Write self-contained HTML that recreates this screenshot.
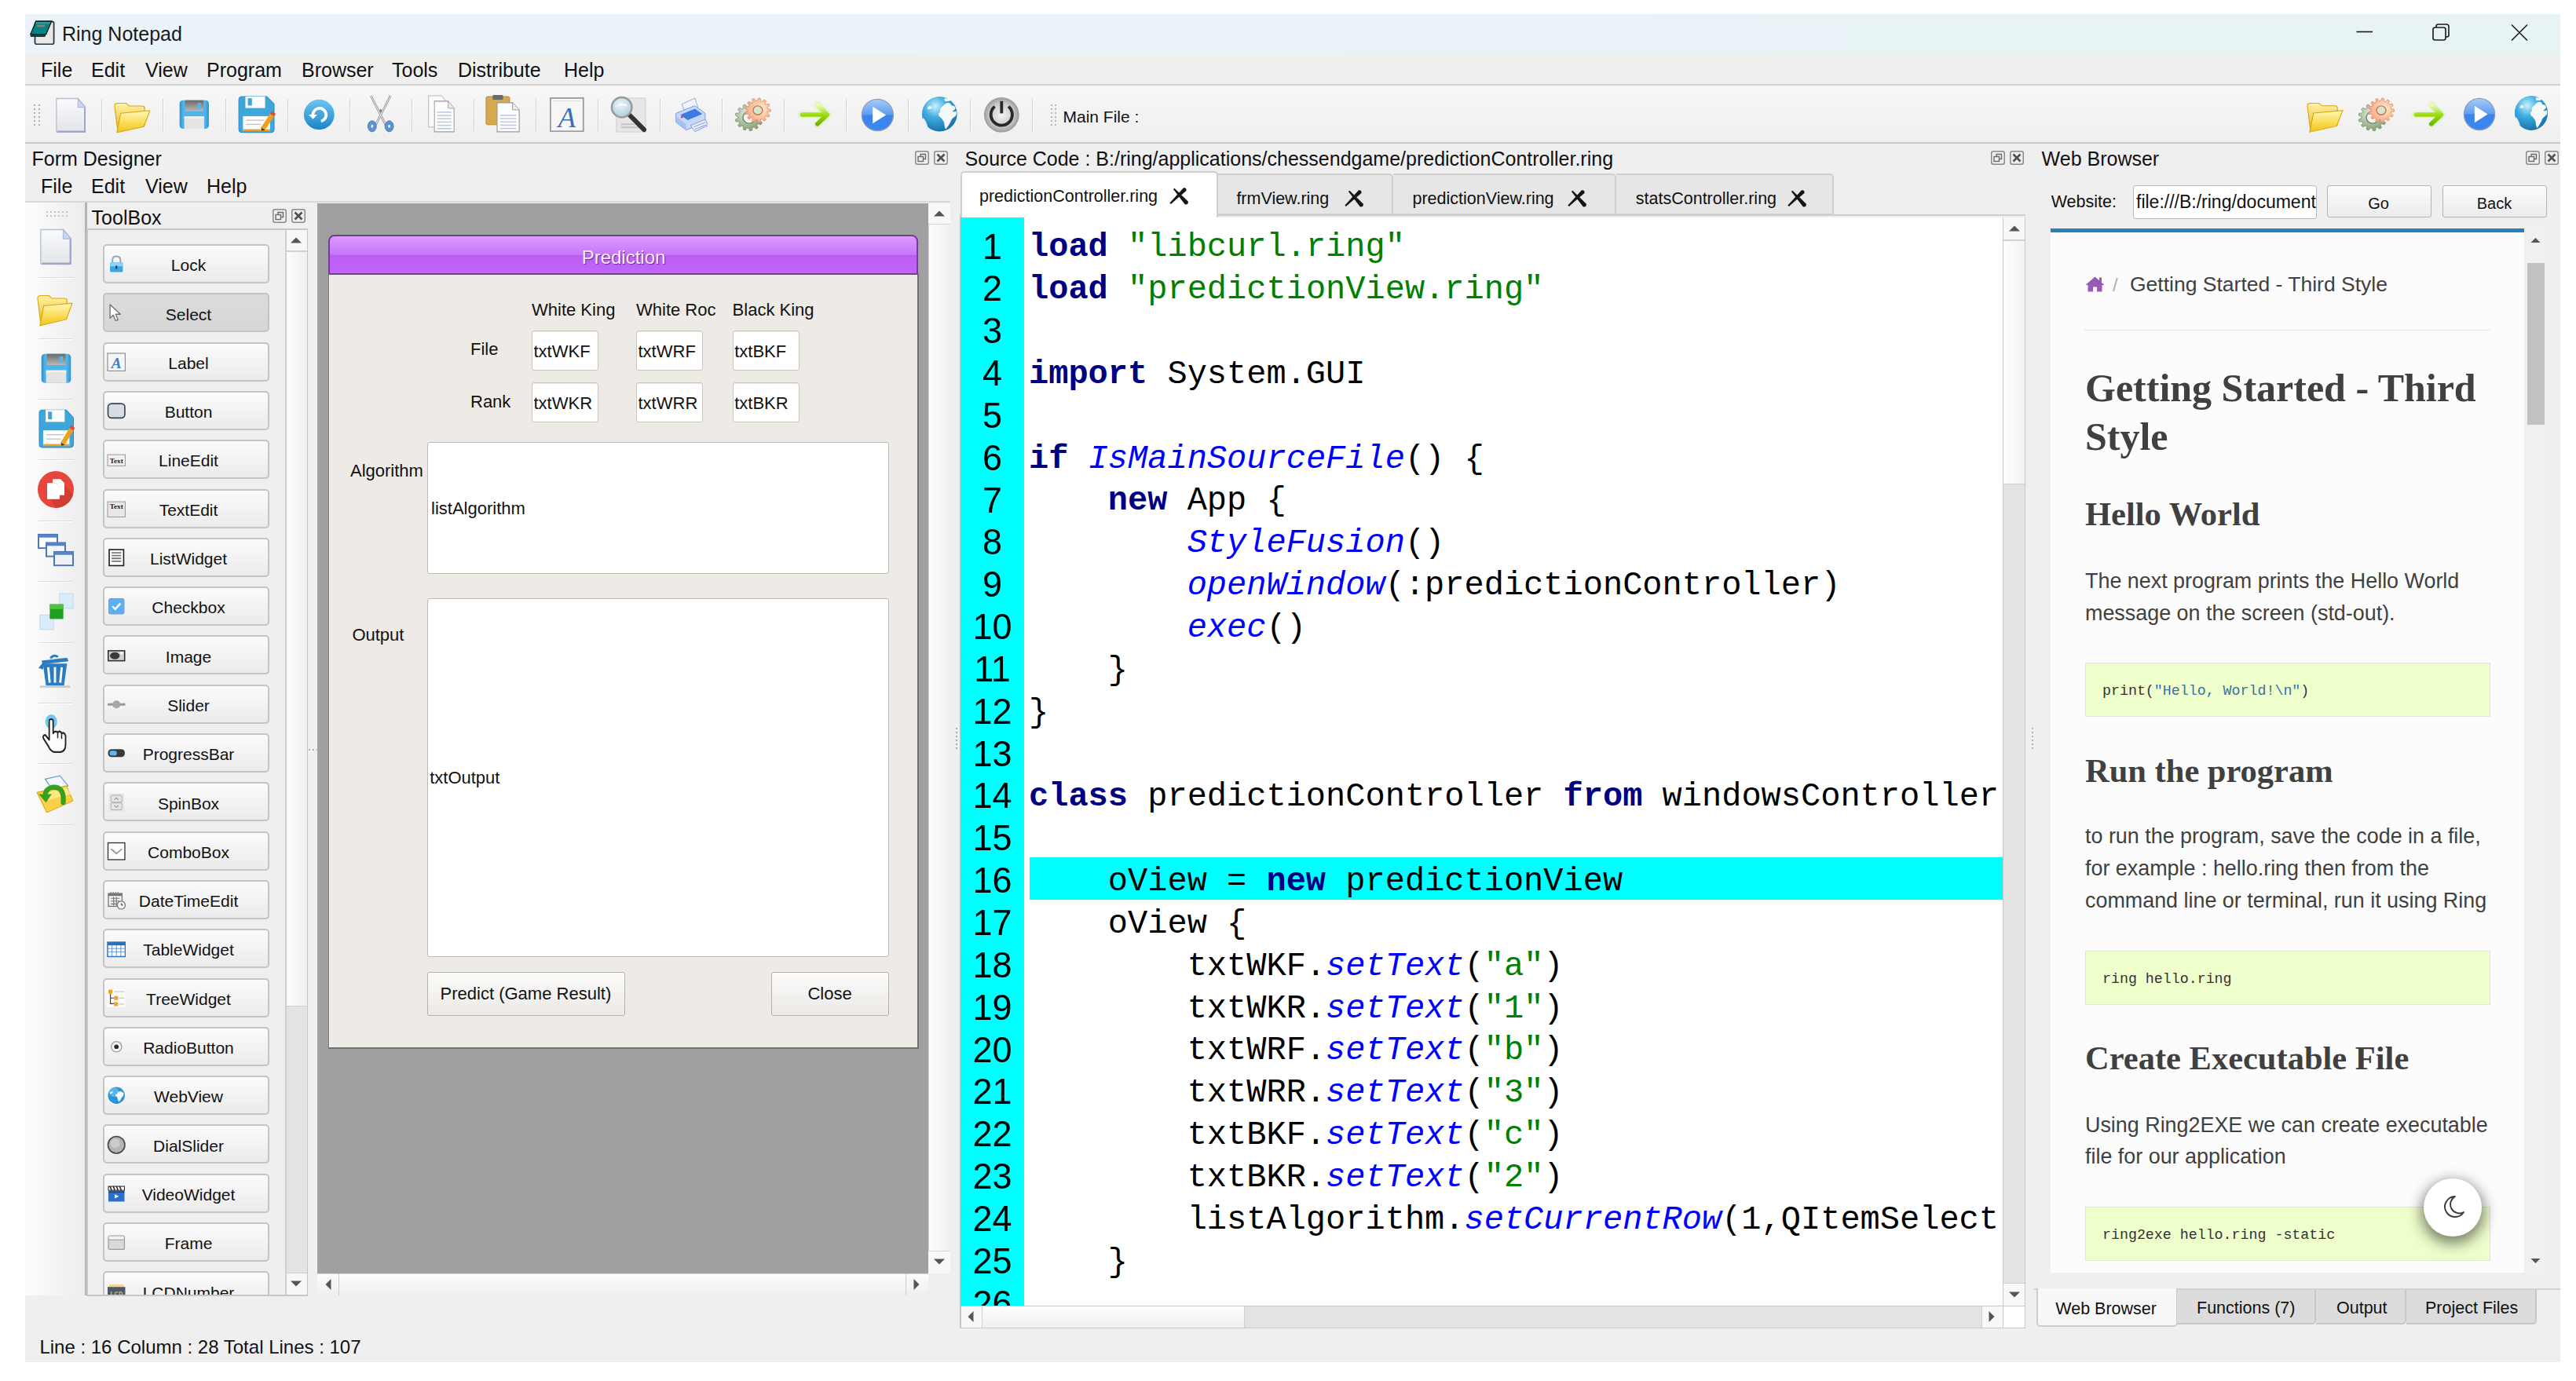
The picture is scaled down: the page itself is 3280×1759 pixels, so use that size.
<!DOCTYPE html><html><head><meta charset="utf-8"><title>Ring Notepad</title><style>
html,body{margin:0;padding:0;}
body{width:3280px;height:1759px;position:relative;overflow:hidden;background:#fff;font-family:"Liberation Sans",sans-serif;}
.a{position:absolute;box-sizing:border-box;}
.t{position:absolute;line-height:1;white-space:pre;}
</style></head><body>
<div class="a" style="left:32.0px;top:18.0px;width:3228.0px;height:1717.0px;background:#efefef"></div>
<div class="a" style="left:32.0px;top:18.0px;width:3228.0px;height:49.0px;background:linear-gradient(90deg,#ebf3f9,#e8f3f6)"></div>
<div class="t " style="left:79.0px;top:30.8px;font-size:25px;font-family:'Liberation Sans',sans-serif;color:#1a1a1a;">Ring Notepad</div>
<div class="a" style="left:32.0px;top:67.0px;width:3228.0px;height:41.0px;background:#efefef"></div>
<div class="t " style="left:52.0px;top:76.8px;font-size:25px;font-family:'Liberation Sans',sans-serif;color:#111;">File</div>
<div class="t " style="left:116.0px;top:76.8px;font-size:25px;font-family:'Liberation Sans',sans-serif;color:#111;">Edit</div>
<div class="t " style="left:185.0px;top:76.8px;font-size:25px;font-family:'Liberation Sans',sans-serif;color:#111;">View</div>
<div class="t " style="left:263.0px;top:76.8px;font-size:25px;font-family:'Liberation Sans',sans-serif;color:#111;">Program</div>
<div class="t " style="left:384.0px;top:76.8px;font-size:25px;font-family:'Liberation Sans',sans-serif;color:#111;">Browser</div>
<div class="t " style="left:499.0px;top:76.8px;font-size:25px;font-family:'Liberation Sans',sans-serif;color:#111;">Tools</div>
<div class="t " style="left:583.0px;top:76.8px;font-size:25px;font-family:'Liberation Sans',sans-serif;color:#111;">Distribute</div>
<div class="t " style="left:718.0px;top:76.8px;font-size:25px;font-family:'Liberation Sans',sans-serif;color:#111;">Help</div>
<div class="a" style="left:32.0px;top:107.0px;width:3228.0px;height:76.0px;background:linear-gradient(180deg,#f7f7f7,#efefef);border-top:2px solid #d2d2d2;border-bottom:2px solid #c9c9c9"></div>
<div class="t " style="left:1353.5px;top:138.2px;font-size:21px;font-family:'Liberation Sans',sans-serif;color:#111;">Main File :</div>
<div class="t " style="left:40.5px;top:189.8px;font-size:25px;font-family:'Liberation Sans',sans-serif;color:#111;">Form Designer</div>
<div class="t " style="left:52.0px;top:225.4px;font-size:25px;font-family:'Liberation Sans',sans-serif;color:#111;">File</div>
<div class="t " style="left:116.0px;top:225.4px;font-size:25px;font-family:'Liberation Sans',sans-serif;color:#111;">Edit</div>
<div class="t " style="left:185.0px;top:225.4px;font-size:25px;font-family:'Liberation Sans',sans-serif;color:#111;">View</div>
<div class="t " style="left:263.0px;top:225.4px;font-size:25px;font-family:'Liberation Sans',sans-serif;color:#111;">Help</div>
<div class="a" style="left:32.0px;top:256.0px;width:1178.0px;height:2.0px;background:#d8d8d8"></div>
<div class="a" style="left:32.0px;top:258.0px;width:77.0px;height:1392.0px;background:linear-gradient(90deg,#fdfdfd,#ececec)"></div>
<div class="a" style="left:108.0px;top:258.0px;width:3.0px;height:1392.0px;background:#b4b4b4"></div>
<div class="t " style="left:116.6px;top:264.8px;font-size:25px;font-family:'Liberation Sans',sans-serif;color:#111;">ToolBox</div>
<div class="a" style="left:110.0px;top:291.0px;width:282.0px;height:1360.0px;background:#efefef;border:2px solid #c6c6c6"></div>
<div class="a" style="left:363.0px;top:293.0px;width:28.0px;height:1356.0px;background:#e3e3e3;border-left:2px solid #cfcfcf"></div>
<div class="a" style="left:365.0px;top:320.0px;width:26.0px;height:962.0px;background:linear-gradient(90deg,#fbfbfb,#f1f1f1);border-top:1px solid #d0d0d0;border-bottom:1px solid #d0d0d0"></div>
<div class="a" style="left:365.0px;top:293.0px;width:26.0px;height:27.0px;background:#f7f7f7;border-bottom:1px solid #d0d0d0"></div>
<div class="a" style="left:365.0px;top:1621.0px;width:26.0px;height:28.0px;background:#f7f7f7;border-top:1px solid #d0d0d0"></div>
<div class="a" style="left:404.0px;top:259.0px;width:778.0px;height:1363.0px;background:#a0a0a0"></div>
<div class="a" style="left:1182.0px;top:259.0px;width:28.0px;height:1363.0px;background:linear-gradient(90deg,#fcfcfc,#f0f0f0);border-left:1px solid #d6d6d6"></div>
<div class="a" style="left:1182.0px;top:259.0px;width:28.0px;height:27.0px;background:#f8f8f8;border-bottom:1px solid #d6d6d6"></div>
<div class="a" style="left:1182.0px;top:1593.0px;width:28.0px;height:29.0px;background:#f8f8f8;border-top:1px solid #d6d6d6"></div>
<div class="a" style="left:404.0px;top:1622.0px;width:778.0px;height:28.0px;background:linear-gradient(180deg,#fbfbfb,#efefef);border-top:1px solid #d6d6d6"></div>
<div class="a" style="left:404.0px;top:1622.0px;width:28.0px;height:28.0px;border-right:1px solid #cfcfcf"></div>
<div class="a" style="left:1153.0px;top:1622.0px;width:29.0px;height:28.0px;border-left:1px solid #cfcfcf"></div>
<div class="a" style="left:1182.0px;top:1622.0px;width:28.0px;height:28.0px;background:#efefef"></div>
<div class="a" style="left:418.0px;top:349.0px;width:751.5px;height:987.0px;background:#eeebe7;border-right:2px solid #6f6f6f;border-bottom:2px solid #6f6f6f;border-left:1px solid #7a7a7a;box-shadow:inset 1px 0 0 #fff"></div>
<div class="a" style="left:418.0px;top:299.0px;width:750.5px;height:51.0px;background:linear-gradient(180deg,#dd9afd 0%,#c978fb 46%,#c572fa 50%,#bb5ef2 52%,#c264fb 100%);border-radius:8px 8px 0 0;border:2px solid #70408f"></div>
<div class="t " style="left:794.0px;top:315.7px;font-size:24px;font-family:'Liberation Sans',sans-serif;color:#f7eefc;transform:translateX(-50%);text-shadow:1px 1px 1px #6a2a8a">Prediction</div>
<div class="t " style="left:677.0px;top:384.4px;font-size:22px;font-family:'Liberation Sans',sans-serif;color:#111;">White King</div>
<div class="t " style="left:810.0px;top:384.4px;font-size:22px;font-family:'Liberation Sans',sans-serif;color:#111;">White Roc</div>
<div class="t " style="left:932.6px;top:384.4px;font-size:22px;font-family:'Liberation Sans',sans-serif;color:#111;">Black King</div>
<div class="t " style="left:599.0px;top:433.7px;font-size:22px;font-family:'Liberation Sans',sans-serif;color:#111;">File</div>
<div class="t " style="left:599.0px;top:501.4px;font-size:22px;font-family:'Liberation Sans',sans-serif;color:#111;">Rank</div>
<div class="a" style="left:677.0px;top:421.0px;width:85.0px;height:51.0px;background:#fff;border:1px solid #c9c6c2;border-radius:3px;box-shadow:inset 0 1px 0 #e8e8e8"></div>
<div class="t " style="left:679.5px;top:436.9px;font-size:22px;font-family:'Liberation Sans',sans-serif;color:#111;width:80px;overflow:hidden">txtWKF</div>
<div class="a" style="left:810.0px;top:421.0px;width:85.0px;height:51.0px;background:#fff;border:1px solid #c9c6c2;border-radius:3px;box-shadow:inset 0 1px 0 #e8e8e8"></div>
<div class="t " style="left:812.5px;top:436.9px;font-size:22px;font-family:'Liberation Sans',sans-serif;color:#111;width:80px;overflow:hidden">txtWRF</div>
<div class="a" style="left:932.7px;top:421.0px;width:85.0px;height:51.0px;background:#fff;border:1px solid #c9c6c2;border-radius:3px;box-shadow:inset 0 1px 0 #e8e8e8"></div>
<div class="t " style="left:935.2px;top:436.9px;font-size:22px;font-family:'Liberation Sans',sans-serif;color:#111;width:80px;overflow:hidden">txtBKF</div>
<div class="a" style="left:677.0px;top:486.7px;width:85.0px;height:51.0px;background:#fff;border:1px solid #c9c6c2;border-radius:3px;box-shadow:inset 0 1px 0 #e8e8e8"></div>
<div class="t " style="left:679.5px;top:502.6px;font-size:22px;font-family:'Liberation Sans',sans-serif;color:#111;width:80px;overflow:hidden">txtWKR</div>
<div class="a" style="left:810.0px;top:486.7px;width:85.0px;height:51.0px;background:#fff;border:1px solid #c9c6c2;border-radius:3px;box-shadow:inset 0 1px 0 #e8e8e8"></div>
<div class="t " style="left:812.5px;top:502.6px;font-size:22px;font-family:'Liberation Sans',sans-serif;color:#111;width:80px;overflow:hidden">txtWRR</div>
<div class="a" style="left:932.7px;top:486.7px;width:85.0px;height:51.0px;background:#fff;border:1px solid #c9c6c2;border-radius:3px;box-shadow:inset 0 1px 0 #e8e8e8"></div>
<div class="t " style="left:935.2px;top:502.6px;font-size:22px;font-family:'Liberation Sans',sans-serif;color:#111;width:80px;overflow:hidden">txtBKR</div>
<div class="t " style="left:446.0px;top:589.2px;font-size:22px;font-family:'Liberation Sans',sans-serif;color:#111;">Algorithm</div>
<div class="a" style="left:544.0px;top:563.0px;width:588.0px;height:168.0px;background:#fff;border:1px solid #bdbab6;border-radius:3px"></div>
<div class="t " style="left:549.0px;top:637.4px;font-size:22px;font-family:'Liberation Sans',sans-serif;color:#111;">listAlgorithm</div>
<div class="t " style="left:448.4px;top:797.7px;font-size:22px;font-family:'Liberation Sans',sans-serif;color:#111;">Output</div>
<div class="a" style="left:543.5px;top:762.0px;width:588.5px;height:457.0px;background:#fff;border:1px solid #bdbab6;border-radius:3px"></div>
<div class="t " style="left:547.2px;top:980.0px;font-size:22px;font-family:'Liberation Sans',sans-serif;color:#111;">txtOutput</div>
<div class="a" style="left:544.0px;top:1237.5px;width:252.0px;height:56.0px;background:linear-gradient(180deg,#fbfbfa,#ebe9e6);border:1px solid #b5b2ae;border-radius:3px"></div>
<div class="t " style="left:560.6px;top:1255.2px;font-size:22px;font-family:'Liberation Sans',sans-serif;color:#111;">Predict (Game Result)</div>
<div class="a" style="left:981.5px;top:1237.5px;width:150.5px;height:56.0px;background:linear-gradient(180deg,#fbfbfa,#ebe9e6);border:1px solid #b5b2ae;border-radius:3px"></div>
<div class="t " style="left:1028.4px;top:1255.2px;font-size:22px;font-family:'Liberation Sans',sans-serif;color:#111;">Close</div>
<div class="t " style="left:1228.6px;top:190.1px;font-size:25px;font-family:'Liberation Sans',sans-serif;color:#111;">Source Code : B:/ring/applications/chessendgame/predictionController.ring</div>
<div class="a" style="left:1223.0px;top:273.0px;width:1356.0px;height:4.0px;background:#efefef;border-top:2px solid #cfcfcf"></div>
<div class="a" style="left:1223.0px;top:218.0px;width:327.5px;height:59.0px;background:#fff;border:2px solid #cfcfcf;border-bottom:none;border-radius:5px 5px 0 0"></div>
<div class="t " style="left:1247.0px;top:240.3px;font-size:21.5px;font-family:'Liberation Sans',sans-serif;color:#111;">predictionController.ring</div>
<svg class="a" style="left:1488.5px;top:238.0px" width="24" height="24" viewBox="0 0 24 24"><path d="M6.45 1.74 L23.86 18.67 Q24.4 22.8 19.74 22.33 L4.95 3.07 Z" fill="#151515"/><path d="M17.96 1.31 Q22 0.6 21.44 4.89 L1.8 21.92 L0.4 20.48 Z" fill="#151515"/></svg>
<div class="a" style="left:1550.5px;top:221.0px;width:223.5px;height:53.0px;background:#e6e6e6;border:2px solid #cfcfcf;border-left:none;border-radius:0 5px 0 0"></div>
<div class="t " style="left:1574.4px;top:242.8px;font-size:21.5px;font-family:'Liberation Sans',sans-serif;color:#111;">frmView.ring</div>
<svg class="a" style="left:1712.0px;top:240.5px" width="24" height="24" viewBox="0 0 24 24"><path d="M6.45 1.74 L23.86 18.67 Q24.4 22.8 19.74 22.33 L4.95 3.07 Z" fill="#151515"/><path d="M17.96 1.31 Q22 0.6 21.44 4.89 L1.8 21.92 L0.4 20.48 Z" fill="#151515"/></svg>
<div class="a" style="left:1774.0px;top:221.0px;width:284.3px;height:53.0px;background:#e6e6e6;border:2px solid #cfcfcf;border-left:none;border-radius:0 5px 0 0"></div>
<div class="t " style="left:1798.5px;top:242.8px;font-size:21.5px;font-family:'Liberation Sans',sans-serif;color:#111;">predictionView.ring</div>
<svg class="a" style="left:1996.0px;top:240.5px" width="24" height="24" viewBox="0 0 24 24"><path d="M6.45 1.74 L23.86 18.67 Q24.4 22.8 19.74 22.33 L4.95 3.07 Z" fill="#151515"/><path d="M17.96 1.31 Q22 0.6 21.44 4.89 L1.8 21.92 L0.4 20.48 Z" fill="#151515"/></svg>
<div class="a" style="left:2058.3px;top:221.0px;width:276.7px;height:53.0px;background:#e6e6e6;border:2px solid #cfcfcf;border-left:none;border-radius:0 5px 0 0"></div>
<div class="t " style="left:2082.8px;top:242.8px;font-size:21.5px;font-family:'Liberation Sans',sans-serif;color:#111;">statsController.ring</div>
<svg class="a" style="left:2275.5px;top:240.5px" width="24" height="24" viewBox="0 0 24 24"><path d="M6.45 1.74 L23.86 18.67 Q24.4 22.8 19.74 22.33 L4.95 3.07 Z" fill="#151515"/><path d="M17.96 1.31 Q22 0.6 21.44 4.89 L1.8 21.92 L0.4 20.48 Z" fill="#151515"/></svg>
<div class="a" style="left:1223.0px;top:277.0px;width:1327.0px;height:1386.0px;background:#fff"></div>
<div class="a" style="left:1223.0px;top:277.0px;width:81.0px;height:1386.0px;background:#00ffff"></div>
<div class="a" style="left:1222.0px;top:273.0px;width:1.0px;height:1419.0px;background:#c4c4c4"></div>
<div class="a" style="left:1311.0px;top:1092.0px;width:1239.0px;height:53.5px;background:#00ffff"></div>
<div class="a" style="left:2550.0px;top:277.0px;width:29.0px;height:1386.0px;background:#e3e3e3;border-left:1px solid #c8c8c8;border-right:1px solid #c8c8c8"></div>
<div class="a" style="left:2551.0px;top:305.7px;width:27.0px;height:311.0px;background:linear-gradient(90deg,#fdfdfd,#f3f3f3);border-top:1px solid #d0d0d0;border-bottom:1px solid #d0d0d0"></div>
<div class="a" style="left:2551.0px;top:277.0px;width:27.0px;height:29.0px;background:#f8f8f8;border-bottom:1px solid #d0d0d0"></div>
<div class="a" style="left:2551.0px;top:1634.0px;width:27.0px;height:29.0px;background:#f8f8f8;border-top:1px solid #d0d0d0"></div>
<div class="a" style="left:1223.0px;top:1663.0px;width:1327.0px;height:29.0px;background:#e3e3e3;border:1px solid #c8c8c8"></div>
<div class="a" style="left:1250.0px;top:1664.0px;width:335.0px;height:27.0px;background:linear-gradient(180deg,#fdfdfd,#f0f0f0);border-left:1px solid #d0d0d0;border-right:1px solid #d0d0d0"></div>
<div class="a" style="left:1224.0px;top:1664.0px;width:26.0px;height:27.0px;background:#f8f8f8"></div>
<div class="a" style="left:2523.0px;top:1664.0px;width:27.0px;height:27.0px;background:#f8f8f8;border-left:1px solid #d0d0d0"></div>
<div class="a" style="left:2550.0px;top:1663.0px;width:29.0px;height:29.0px;background:#fff;border:1px solid #c8c8c8"></div>
<div class="t " style="left:2599.6px;top:190.1px;font-size:25px;font-family:'Liberation Sans',sans-serif;color:#111;">Web Browser</div>
<div class="t " style="left:2611.7px;top:247.2px;font-size:21.5px;font-family:'Liberation Sans',sans-serif;color:#111;">Website:</div>
<div class="a" style="left:2715.5px;top:236.0px;width:234.0px;height:42.5px;background:#fff;border:1px solid #b9b9b9;border-radius:3px"></div>
<div class="t " style="left:2720.0px;top:245.9px;font-size:23px;font-family:'Liberation Sans',sans-serif;color:#111;width:229px;overflow:hidden">file:///B:/ring/document</div>
<div class="a" style="left:2963.0px;top:236.0px;width:133.0px;height:41.0px;background:linear-gradient(180deg,#fcfcfc,#ececec);border:1px solid #b3b3b3;border-radius:3px"></div>
<div class="t " style="left:3028.5px;top:249.1px;font-size:20px;font-family:'Liberation Sans',sans-serif;color:#111;transform:translateX(-50%)">Go</div>
<div class="a" style="left:3109.5px;top:236.0px;width:133.0px;height:41.0px;background:linear-gradient(180deg,#fcfcfc,#ececec);border:1px solid #b3b3b3;border-radius:3px"></div>
<div class="t " style="left:3176.0px;top:249.1px;font-size:20px;font-family:'Liberation Sans',sans-serif;color:#111;transform:translateX(-50%)">Back</div>
<div class="a" style="left:2610.5px;top:291.0px;width:604.0px;height:5.0px;background:#2980b9"></div>
<div class="a" style="left:2610.5px;top:296.0px;width:604.0px;height:1325.0px;background:#fcfcfc"></div>
<div class="a" style="left:3214.0px;top:291.0px;width:29.0px;height:1330.0px;background:#f0f0f0"></div>
<div class="a" style="left:3218.0px;top:335.0px;width:22.0px;height:206.0px;background:#c1c1c1"></div>
<div class="t " style="left:2712.0px;top:348.9px;font-size:26.5px;font-family:'Liberation Sans',sans-serif;color:#404040;">Getting Started - Third Style</div>
<div class="t " style="left:2690.0px;top:351.0px;font-size:24px;font-family:'Liberation Sans',sans-serif;color:#b0b0b0;">/</div>
<svg class="a" style="left:2655.0px;top:352.0px" width="25" height="20" viewBox="0 0 25 20"><path d="M12.5 0.5 L0.5 11 H3.5 V19.5 H10 V13.5 H15 V19.5 H21.5 V11 H24.5 Z" fill="#9b59b6"/><rect x="18" y="1.5" width="3" height="6" fill="#9b59b6"/></svg>
<div class="a" style="left:2654.0px;top:420.0px;width:517.0px;height:1.0px;background:#e1e4e5"></div>
<div class="t " style="left:2655.0px;top:469.4px;font-size:50px;font-family:'Liberation Serif',serif;color:#404040;font-weight:bold">Getting Started - Third</div>
<div class="t " style="left:2655.0px;top:531.4px;font-size:50px;font-family:'Liberation Serif',serif;color:#404040;font-weight:bold">Style</div>
<div class="t " style="left:2655.0px;top:634.4px;font-size:42.5px;font-family:'Liberation Serif',serif;color:#404040;font-weight:bold">Hello World</div>
<div class="t " style="left:2655.0px;top:727.2px;font-size:26.9px;font-family:'Liberation Sans',sans-serif;color:#404040;">The next program prints the Hello World</div>
<div class="t " style="left:2655.0px;top:768.2px;font-size:26.9px;font-family:'Liberation Sans',sans-serif;color:#404040;">message on the screen (std-out).</div>
<div class="a" style="left:2655.0px;top:844.0px;width:516.0px;height:69.0px;background:#eeffcc;border:1px solid #e1e4e5"></div>
<div class="t " style="left:2677.0px;top:871.4px;font-size:18.3px;font-family:'Liberation Mono',monospace;color:#333;">print(<span style="color:#4070a0">&quot;Hello, World!\n&quot;</span>)</div>
<div class="t " style="left:2655.0px;top:960.7px;font-size:42.5px;font-family:'Liberation Serif',serif;color:#404040;font-weight:bold">Run the program</div>
<div class="t " style="left:2655.0px;top:1052.2px;font-size:26.9px;font-family:'Liberation Sans',sans-serif;color:#404040;">to run the program, save the code in a file,</div>
<div class="t " style="left:2655.0px;top:1093.2px;font-size:26.9px;font-family:'Liberation Sans',sans-serif;color:#404040;">for example : hello.ring then from the</div>
<div class="t " style="left:2655.0px;top:1133.8px;font-size:26.9px;font-family:'Liberation Sans',sans-serif;color:#404040;">command line or terminal, run it using Ring</div>
<div class="a" style="left:2655.0px;top:1210.5px;width:516.0px;height:69.0px;background:#eeffcc;border:1px solid #e1e4e5"></div>
<div class="t " style="left:2677.0px;top:1238.0px;font-size:18.3px;font-family:'Liberation Mono',monospace;color:#333;">ring hello.ring</div>
<div class="t " style="left:2655.0px;top:1327.4px;font-size:42.5px;font-family:'Liberation Serif',serif;color:#404040;font-weight:bold">Create Executable File</div>
<div class="t " style="left:2655.0px;top:1420.2px;font-size:26.9px;font-family:'Liberation Sans',sans-serif;color:#404040;">Using Ring2EXE we can create executable</div>
<div class="t " style="left:2655.0px;top:1460.2px;font-size:26.9px;font-family:'Liberation Sans',sans-serif;color:#404040;">file for our application</div>
<div class="a" style="left:2655.0px;top:1537.0px;width:516.0px;height:69.0px;background:#eeffcc;border:1px solid #e1e4e5"></div>
<div class="t " style="left:2677.0px;top:1564.0px;font-size:18.3px;font-family:'Liberation Mono',monospace;color:#333;">ring2exe hello.ring -static</div>
<div class="a" style="left:3086.0px;top:1500.5px;width:74.0px;height:74.0px;background:#fff;border-radius:50%;box-shadow:0 6px 18px 3px rgba(0,0,0,0.5)"></div>
<svg class="a" style="left:3104.0px;top:1518.0px" width="38" height="38" viewBox="0 0 38 38"><path d="M22 6 A13 13 0 1 0 33 26 A11 11 0 0 1 22 6 Z" fill="none" stroke="#3a3a3a" stroke-width="1.9" stroke-linejoin="round"/></svg>
<div class="a" style="left:2590.0px;top:1641.0px;width:670.0px;height:2.0px;background:#d2d2d2"></div>
<div class="a" style="left:2593.0px;top:1641.0px;width:180.0px;height:49.0px;background:#f7f7f7;border:2px solid #cdcdcd;border-top:none;border-radius:0 0 5px 5px"></div>
<div class="a" style="left:2772.0px;top:1643.0px;width:177.0px;height:44.0px;background:#dcdcdc;border:2px solid #c8c8c8;border-top:none;border-left:none;border-radius:0 0 5px 0"></div>
<div class="a" style="left:2949.0px;top:1643.0px;width:114.6px;height:44.0px;background:#dcdcdc;border:2px solid #c8c8c8;border-top:none;border-left:none;border-radius:0 0 5px 0"></div>
<div class="a" style="left:3063.6px;top:1643.0px;width:166.4px;height:44.0px;background:#dcdcdc;border:2px solid #c8c8c8;border-top:none;border-left:none;border-radius:0 0 5px 0"></div>
<div class="t " style="left:2617.3px;top:1657.4px;font-size:21.5px;font-family:'Liberation Sans',sans-serif;color:#111;">Web Browser</div>
<div class="t " style="left:2797.0px;top:1655.8px;font-size:21.5px;font-family:'Liberation Sans',sans-serif;color:#111;">Functions (7)</div>
<div class="t " style="left:2975.0px;top:1655.8px;font-size:21.5px;font-family:'Liberation Sans',sans-serif;color:#111;">Output</div>
<div class="t " style="left:3088.0px;top:1655.8px;font-size:21.5px;font-family:'Liberation Sans',sans-serif;color:#111;">Project Files</div>
<div class="t " style="left:50.4px;top:1703.7px;font-size:24px;font-family:'Liberation Sans',sans-serif;color:#111;">Line : 16 Column : 28 Total Lines : 107</div>
<div class="a" style="left:1223px;top:277px;width:1327px;height:1386px;overflow:hidden">
<div class="t" style="left:0.5px;width:80px;text-align:center;top:14.5px;font-size:45px;color:#000;transform:scaleY(1.015);transform-origin:50% 38px">1</div>
<div class="t" style="left:87px;top:17.4px;font-size:42px;font-family:'Liberation Mono',monospace;color:#000"><span style="color:#000080;font-weight:bold">load</span> <span style="color:#008000">&quot;libcurl.ring&quot;</span></div>
<div class="t" style="left:0.5px;width:80px;text-align:center;top:68.3px;font-size:45px;color:#000;transform:scaleY(1.015);transform-origin:50% 38px">2</div>
<div class="t" style="left:87px;top:71.2px;font-size:42px;font-family:'Liberation Mono',monospace;color:#000"><span style="color:#000080;font-weight:bold">load</span> <span style="color:#008000">&quot;predictionView.ring&quot;</span></div>
<div class="t" style="left:0.5px;width:80px;text-align:center;top:122.2px;font-size:45px;color:#000;transform:scaleY(1.015);transform-origin:50% 38px">3</div>
<div class="t" style="left:87px;top:125.1px;font-size:42px;font-family:'Liberation Mono',monospace;color:#000"></div>
<div class="t" style="left:0.5px;width:80px;text-align:center;top:176.0px;font-size:45px;color:#000;transform:scaleY(1.015);transform-origin:50% 38px">4</div>
<div class="t" style="left:87px;top:178.9px;font-size:42px;font-family:'Liberation Mono',monospace;color:#000"><span style="color:#000080;font-weight:bold">import</span> System.GUI</div>
<div class="t" style="left:0.5px;width:80px;text-align:center;top:229.9px;font-size:45px;color:#000;transform:scaleY(1.015);transform-origin:50% 38px">5</div>
<div class="t" style="left:87px;top:232.8px;font-size:42px;font-family:'Liberation Mono',monospace;color:#000"></div>
<div class="t" style="left:0.5px;width:80px;text-align:center;top:283.7px;font-size:45px;color:#000;transform:scaleY(1.015);transform-origin:50% 38px">6</div>
<div class="t" style="left:87px;top:286.6px;font-size:42px;font-family:'Liberation Mono',monospace;color:#000"><span style="color:#000080;font-weight:bold">if</span> <span style="color:#0000ff;font-style:italic">IsMainSourceFile</span>() {</div>
<div class="t" style="left:0.5px;width:80px;text-align:center;top:337.5px;font-size:45px;color:#000;transform:scaleY(1.015);transform-origin:50% 38px">7</div>
<div class="t" style="left:87px;top:340.4px;font-size:42px;font-family:'Liberation Mono',monospace;color:#000">    <span style="color:#000080;font-weight:bold">new</span> App {</div>
<div class="t" style="left:0.5px;width:80px;text-align:center;top:391.4px;font-size:45px;color:#000;transform:scaleY(1.015);transform-origin:50% 38px">8</div>
<div class="t" style="left:87px;top:394.3px;font-size:42px;font-family:'Liberation Mono',monospace;color:#000">        <span style="color:#0000ff;font-style:italic">StyleFusion</span>()</div>
<div class="t" style="left:0.5px;width:80px;text-align:center;top:445.2px;font-size:45px;color:#000;transform:scaleY(1.015);transform-origin:50% 38px">9</div>
<div class="t" style="left:87px;top:448.1px;font-size:42px;font-family:'Liberation Mono',monospace;color:#000">        <span style="color:#0000ff;font-style:italic">openWindow</span>(:predictionController)</div>
<div class="t" style="left:0.5px;width:80px;text-align:center;top:499.1px;font-size:45px;color:#000;transform:scaleY(1.015);transform-origin:50% 38px">10</div>
<div class="t" style="left:87px;top:502.0px;font-size:42px;font-family:'Liberation Mono',monospace;color:#000">        <span style="color:#0000ff;font-style:italic">exec</span>()</div>
<div class="t" style="left:0.5px;width:80px;text-align:center;top:552.9px;font-size:45px;color:#000;transform:scaleY(1.015);transform-origin:50% 38px">11</div>
<div class="t" style="left:87px;top:555.8px;font-size:42px;font-family:'Liberation Mono',monospace;color:#000">    }</div>
<div class="t" style="left:0.5px;width:80px;text-align:center;top:606.7px;font-size:45px;color:#000;transform:scaleY(1.015);transform-origin:50% 38px">12</div>
<div class="t" style="left:87px;top:609.6px;font-size:42px;font-family:'Liberation Mono',monospace;color:#000">}</div>
<div class="t" style="left:0.5px;width:80px;text-align:center;top:660.6px;font-size:45px;color:#000;transform:scaleY(1.015);transform-origin:50% 38px">13</div>
<div class="t" style="left:87px;top:663.5px;font-size:42px;font-family:'Liberation Mono',monospace;color:#000"></div>
<div class="t" style="left:0.5px;width:80px;text-align:center;top:714.4px;font-size:45px;color:#000;transform:scaleY(1.015);transform-origin:50% 38px">14</div>
<div class="t" style="left:87px;top:717.3px;font-size:42px;font-family:'Liberation Mono',monospace;color:#000"><span style="color:#000080;font-weight:bold">class</span> predictionController <span style="color:#000080;font-weight:bold">from</span> windowsController</div>
<div class="t" style="left:0.5px;width:80px;text-align:center;top:768.3px;font-size:45px;color:#000;transform:scaleY(1.015);transform-origin:50% 38px">15</div>
<div class="t" style="left:87px;top:771.2px;font-size:42px;font-family:'Liberation Mono',monospace;color:#000"></div>
<div class="t" style="left:0.5px;width:80px;text-align:center;top:822.1px;font-size:45px;color:#000;transform:scaleY(1.015);transform-origin:50% 38px">16</div>
<div class="t" style="left:87px;top:825.0px;font-size:42px;font-family:'Liberation Mono',monospace;color:#000">    oView = <span style="color:#000080;font-weight:bold">new</span> predictionView</div>
<div class="t" style="left:0.5px;width:80px;text-align:center;top:875.9px;font-size:45px;color:#000;transform:scaleY(1.015);transform-origin:50% 38px">17</div>
<div class="t" style="left:87px;top:878.8px;font-size:42px;font-family:'Liberation Mono',monospace;color:#000">    oView {</div>
<div class="t" style="left:0.5px;width:80px;text-align:center;top:929.8px;font-size:45px;color:#000;transform:scaleY(1.015);transform-origin:50% 38px">18</div>
<div class="t" style="left:87px;top:932.7px;font-size:42px;font-family:'Liberation Mono',monospace;color:#000">        txtWKF.<span style="color:#0000ff;font-style:italic">setText</span>(<span style="color:#008000">&quot;a&quot;</span>)</div>
<div class="t" style="left:0.5px;width:80px;text-align:center;top:983.6px;font-size:45px;color:#000;transform:scaleY(1.015);transform-origin:50% 38px">19</div>
<div class="t" style="left:87px;top:986.5px;font-size:42px;font-family:'Liberation Mono',monospace;color:#000">        txtWKR.<span style="color:#0000ff;font-style:italic">setText</span>(<span style="color:#008000">&quot;1&quot;</span>)</div>
<div class="t" style="left:0.5px;width:80px;text-align:center;top:1037.5px;font-size:45px;color:#000;transform:scaleY(1.015);transform-origin:50% 38px">20</div>
<div class="t" style="left:87px;top:1040.4px;font-size:42px;font-family:'Liberation Mono',monospace;color:#000">        txtWRF.<span style="color:#0000ff;font-style:italic">setText</span>(<span style="color:#008000">&quot;b&quot;</span>)</div>
<div class="t" style="left:0.5px;width:80px;text-align:center;top:1091.3px;font-size:45px;color:#000;transform:scaleY(1.015);transform-origin:50% 38px">21</div>
<div class="t" style="left:87px;top:1094.2px;font-size:42px;font-family:'Liberation Mono',monospace;color:#000">        txtWRR.<span style="color:#0000ff;font-style:italic">setText</span>(<span style="color:#008000">&quot;3&quot;</span>)</div>
<div class="t" style="left:0.5px;width:80px;text-align:center;top:1145.1px;font-size:45px;color:#000;transform:scaleY(1.015);transform-origin:50% 38px">22</div>
<div class="t" style="left:87px;top:1148.0px;font-size:42px;font-family:'Liberation Mono',monospace;color:#000">        txtBKF.<span style="color:#0000ff;font-style:italic">setText</span>(<span style="color:#008000">&quot;c&quot;</span>)</div>
<div class="t" style="left:0.5px;width:80px;text-align:center;top:1199.0px;font-size:45px;color:#000;transform:scaleY(1.015);transform-origin:50% 38px">23</div>
<div class="t" style="left:87px;top:1201.9px;font-size:42px;font-family:'Liberation Mono',monospace;color:#000">        txtBKR.<span style="color:#0000ff;font-style:italic">setText</span>(<span style="color:#008000">&quot;2&quot;</span>)</div>
<div class="t" style="left:0.5px;width:80px;text-align:center;top:1252.8px;font-size:45px;color:#000;transform:scaleY(1.015);transform-origin:50% 38px">24</div>
<div class="t" style="left:87px;top:1255.7px;font-size:42px;font-family:'Liberation Mono',monospace;color:#000">        listAlgorithm.<span style="color:#0000ff;font-style:italic">setCurrentRow</span>(1,QItemSelect</div>
<div class="t" style="left:0.5px;width:80px;text-align:center;top:1306.7px;font-size:45px;color:#000;transform:scaleY(1.015);transform-origin:50% 38px">25</div>
<div class="t" style="left:87px;top:1309.6px;font-size:42px;font-family:'Liberation Mono',monospace;color:#000">    }</div>
<div class="t" style="left:0.5px;width:80px;text-align:center;top:1360.5px;font-size:45px;color:#000;transform:scaleY(1.015);transform-origin:50% 38px">26</div>
<div class="t" style="left:87px;top:1363.4px;font-size:42px;font-family:'Liberation Mono',monospace;color:#000"></div>
</div>
<div class="a" style="left:112px;top:293px;width:251px;height:1356px;overflow:hidden">
<div class="a" style="left:19px;top:18.0px;width:212px;height:50px;background:linear-gradient(180deg,#fbfbfb,#ebebeb);border:2px solid #c4c4c4;border-radius:5px"></div>
<div class="t" style="left:21px;width:214px;text-align:center;top:34.2px;font-size:21px;color:#111">Lock</div>
<svg class="a" style="left:23.5px;top:31.3px" width="24.5" height="24.5" viewBox="0 0 24 24"><path d="M7 11 V7 Q7 2.5 12 2.5 Q17 2.5 17 7 V11" fill="none" stroke="#9aa8b8" stroke-width="2"/><rect x="4" y="10" width="16" height="12" rx="1.5" fill="#3aa6e0"/><rect x="4" y="10" width="16" height="5" fill="#8ad4f8"/><rect x="11" y="14" width="2" height="4" fill="#1a3a5a"/></svg>
<div class="a" style="left:19px;top:80.3px;width:212px;height:50px;background:linear-gradient(180deg,#dcdcdc,#d6d6d6);border:2px solid #c4c4c4;border-radius:5px"></div>
<div class="t" style="left:21px;width:214px;text-align:center;top:96.5px;font-size:21px;color:#111">Select</div>
<svg class="a" style="left:23.5px;top:93.6px" width="24.5" height="24.5" viewBox="0 0 24 24"><path d="M4 1 L4 18 L8 14 L11 21 L14 20 L11 13 L17 13 Z" fill="#fff" stroke="#707070" stroke-width="1.3" stroke-linejoin="round"/></svg>
<div class="a" style="left:19px;top:142.6px;width:212px;height:50px;background:linear-gradient(180deg,#fbfbfb,#ebebeb);border:2px solid #c4c4c4;border-radius:5px"></div>
<div class="t" style="left:21px;width:214px;text-align:center;top:158.8px;font-size:21px;color:#111">Label</div>
<svg class="a" style="left:23.5px;top:155.9px" width="24.5" height="24.5" viewBox="0 0 24 24"><rect x="1" y="1" width="22" height="22" fill="#f4f6fa" stroke="#909090" stroke-width="1.2"/><text x="12" y="20" text-anchor="middle" font-family="Liberation Serif" font-style="italic" font-weight="bold" font-size="19" fill="#4a78c0">A</text></svg>
<div class="a" style="left:19px;top:204.9px;width:212px;height:50px;background:linear-gradient(180deg,#fbfbfb,#ebebeb);border:2px solid #c4c4c4;border-radius:5px"></div>
<div class="t" style="left:21px;width:214px;text-align:center;top:221.1px;font-size:21px;color:#111">Button</div>
<svg class="a" style="left:23.5px;top:218.2px" width="24.5" height="24.5" viewBox="0 0 24 24"><rect x="1.5" y="3" width="21" height="18" rx="4.5" fill="#d8dce4" stroke="#3a4250" stroke-width="1.6"/></svg>
<div class="a" style="left:19px;top:267.2px;width:212px;height:50px;background:linear-gradient(180deg,#fbfbfb,#ebebeb);border:2px solid #c4c4c4;border-radius:5px"></div>
<div class="t" style="left:21px;width:214px;text-align:center;top:283.4px;font-size:21px;color:#111">LineEdit</div>
<svg class="a" style="left:23.5px;top:280.5px" width="24.5" height="24.5" viewBox="0 0 24 24"><rect x="1" y="5" width="22" height="14" fill="#f0f0f0" stroke="#9a9a9a" stroke-width="1"/><text x="12" y="16" text-anchor="middle" font-family="Liberation Serif" font-weight="bold" font-size="9" fill="#222">Text</text></svg>
<div class="a" style="left:19px;top:329.5px;width:212px;height:50px;background:linear-gradient(180deg,#fbfbfb,#ebebeb);border:2px solid #c4c4c4;border-radius:5px"></div>
<div class="t" style="left:21px;width:214px;text-align:center;top:345.7px;font-size:21px;color:#111">TextEdit</div>
<svg class="a" style="left:23.5px;top:342.8px" width="24.5" height="24.5" viewBox="0 0 24 24"><rect x="1" y="3" width="22" height="19" fill="#e8e8e8" stroke="#9a9a9a" stroke-width="1"/><text x="12" y="12" text-anchor="middle" font-family="Liberation Serif" font-weight="bold" font-size="9" fill="#222">Text</text></svg>
<div class="a" style="left:19px;top:391.8px;width:212px;height:50px;background:linear-gradient(180deg,#fbfbfb,#ebebeb);border:2px solid #c4c4c4;border-radius:5px"></div>
<div class="t" style="left:21px;width:214px;text-align:center;top:408.0px;font-size:21px;color:#111">ListWidget</div>
<svg class="a" style="left:23.5px;top:405.1px" width="24.5" height="24.5" viewBox="0 0 24 24"><rect x="3" y="2" width="18" height="20" fill="#fff" stroke="#222" stroke-width="1.6"/><path d="M6 6 H18 M6 9.5 H18 M6 13 H18 M6 16.5 H18" stroke="#777" stroke-width="1.8"/></svg>
<div class="a" style="left:19px;top:454.1px;width:212px;height:50px;background:linear-gradient(180deg,#fbfbfb,#ebebeb);border:2px solid #c4c4c4;border-radius:5px"></div>
<div class="t" style="left:21px;width:214px;text-align:center;top:470.3px;font-size:21px;color:#111">Checkbox</div>
<svg class="a" style="left:23.5px;top:467.4px" width="24.5" height="24.5" viewBox="0 0 24 24"><rect x="2.5" y="2.5" width="19" height="19" rx="2.5" fill="#5ab0f4" stroke="#7a9ad0" stroke-width="1"/><path d="M7 12 L10.5 15.5 L17 8.5" fill="none" stroke="#fff" stroke-width="2.4"/></svg>
<div class="a" style="left:19px;top:516.4px;width:212px;height:50px;background:linear-gradient(180deg,#fbfbfb,#ebebeb);border:2px solid #c4c4c4;border-radius:5px"></div>
<div class="t" style="left:21px;width:214px;text-align:center;top:532.6px;font-size:21px;color:#111">Image</div>
<svg class="a" style="left:23.5px;top:529.7px" width="24.5" height="24.5" viewBox="0 0 24 24"><rect x="1" y="5" width="22" height="14" fill="#2a2a2a"/><rect x="2.5" y="6.5" width="19" height="11" fill="#d0d0d0"/><ellipse cx="10" cy="12" rx="6" ry="4.5" fill="#3a3a3a"/><rect x="17" y="7" width="3" height="3" fill="#fff"/></svg>
<div class="a" style="left:19px;top:578.7px;width:212px;height:50px;background:linear-gradient(180deg,#fbfbfb,#ebebeb);border:2px solid #c4c4c4;border-radius:5px"></div>
<div class="t" style="left:21px;width:214px;text-align:center;top:594.9px;font-size:21px;color:#111">Slider</div>
<svg class="a" style="left:23.5px;top:592.0px" width="24.5" height="24.5" viewBox="0 0 24 24"><rect x="1" y="10.5" width="22" height="3" fill="#9a9a9a"/><circle cx="12" cy="12" r="5" fill="#a8a8a8"/></svg>
<div class="a" style="left:19px;top:641.0px;width:212px;height:50px;background:linear-gradient(180deg,#fbfbfb,#ebebeb);border:2px solid #c4c4c4;border-radius:5px"></div>
<div class="t" style="left:21px;width:214px;text-align:center;top:657.2px;font-size:21px;color:#111">ProgressBar</div>
<svg class="a" style="left:23.5px;top:654.3px" width="24.5" height="24.5" viewBox="0 0 24 24"><rect x="1.5" y="7" width="21" height="10" rx="4.5" fill="#3a3a3a"/><rect x="3.5" y="9" width="9" height="6" rx="2.5" fill="#5ab8f8"/></svg>
<div class="a" style="left:19px;top:703.3px;width:212px;height:50px;background:linear-gradient(180deg,#fbfbfb,#ebebeb);border:2px solid #c4c4c4;border-radius:5px"></div>
<div class="t" style="left:21px;width:214px;text-align:center;top:719.5px;font-size:21px;color:#111">SpinBox</div>
<svg class="a" style="left:23.5px;top:716.6px" width="24.5" height="24.5" viewBox="0 0 24 24"><rect x="3" y="1.5" width="18" height="21" fill="#f0f0f0" stroke="#e0e0e0"/><rect x="5" y="3" width="14" height="8.5" rx="2" fill="#e4e4e4" stroke="#b0b0b0"/><rect x="5" y="12.5" width="14" height="8.5" rx="2" fill="#e4e4e4" stroke="#b0b0b0"/><path d="M9.5 8.5 L12 6 L14.5 8.5 M9.5 15.5 L12 18 L14.5 15.5" fill="none" stroke="#909090" stroke-width="1"/></svg>
<div class="a" style="left:19px;top:765.6px;width:212px;height:50px;background:linear-gradient(180deg,#fbfbfb,#ebebeb);border:2px solid #c4c4c4;border-radius:5px"></div>
<div class="t" style="left:21px;width:214px;text-align:center;top:781.8px;font-size:21px;color:#111">ComboBox</div>
<svg class="a" style="left:23.5px;top:778.9px" width="24.5" height="24.5" viewBox="0 0 24 24"><rect x="1.5" y="1.5" width="21" height="21" fill="#fff" stroke="#333" stroke-width="1.3"/><path d="M5 9 L12 15 L19 9" fill="none" stroke="#888" stroke-width="1.3"/><path d="M7 9 L12 13" stroke="#bbb" stroke-width="0.8"/></svg>
<div class="a" style="left:19px;top:827.9px;width:212px;height:50px;background:linear-gradient(180deg,#fbfbfb,#ebebeb);border:2px solid #c4c4c4;border-radius:5px"></div>
<div class="t" style="left:21px;width:214px;text-align:center;top:844.1px;font-size:21px;color:#111">DateTimeEdit</div>
<svg class="a" style="left:23.5px;top:841.2px" width="24.5" height="24.5" viewBox="0 0 24 24"><rect x="2" y="4" width="17" height="16" fill="#f0f0f0" stroke="#777" stroke-width="1.3"/><rect x="2" y="4" width="17" height="3" fill="#777"/><path d="M5 2 V6 M8 2 V6 M11 2 V6 M14 2 V6 M5 10 H16 M5 13.5 H16 M5 17 H12 M8.5 8 V19 M12 8 V19" stroke="#777" stroke-width="1.1"/><circle cx="18" cy="18.5" r="5" fill="#f8f8f8" stroke="#777" stroke-width="1.2"/><path d="M18 16 V18.5 H20" stroke="#777" stroke-width="1"/></svg>
<div class="a" style="left:19px;top:890.2px;width:212px;height:50px;background:linear-gradient(180deg,#fbfbfb,#ebebeb);border:2px solid #c4c4c4;border-radius:5px"></div>
<div class="t" style="left:21px;width:214px;text-align:center;top:906.4px;font-size:21px;color:#111">TableWidget</div>
<svg class="a" style="left:23.5px;top:903.5px" width="24.5" height="24.5" viewBox="0 0 24 24"><rect x="1" y="3" width="22" height="18" fill="#fff" stroke="#2a70c0" stroke-width="1.4"/><rect x="1" y="3" width="22" height="4" fill="#2a70c0"/><path d="M1 11 H23 M1 15 H23 M6.5 7 V21 M12 7 V21 M17.5 7 V21" stroke="#5a90d0" stroke-width="0.9"/></svg>
<div class="a" style="left:19px;top:952.5px;width:212px;height:50px;background:linear-gradient(180deg,#fbfbfb,#ebebeb);border:2px solid #c4c4c4;border-radius:5px"></div>
<div class="t" style="left:21px;width:214px;text-align:center;top:968.7px;font-size:21px;color:#111">TreeWidget</div>
<svg class="a" style="left:23.5px;top:965.8px" width="24.5" height="24.5" viewBox="0 0 24 24"><rect x="0" y="0" width="24" height="24" fill="#fbfbfb"/><rect x="2" y="1.5" width="5" height="5" fill="#f8a020"/><path d="M4.5 6.5 V19 H9 M4.5 12 H9" stroke="#444" stroke-width="1.2" fill="none"/><rect x="9" y="9.5" width="5" height="5" fill="#f8a020"/><rect x="9" y="17" width="5" height="5" fill="#f8a020"/><path d="M15 12 H22 M15 19.5 H22 M9 4 H22" stroke="#c0c0c0" stroke-width="1"/></svg>
<div class="a" style="left:19px;top:1014.8px;width:212px;height:50px;background:linear-gradient(180deg,#fbfbfb,#ebebeb);border:2px solid #c4c4c4;border-radius:5px"></div>
<div class="t" style="left:21px;width:214px;text-align:center;top:1031.0px;font-size:21px;color:#111">RadioButton</div>
<svg class="a" style="left:23.5px;top:1028.1px" width="24.5" height="24.5" viewBox="0 0 24 24"><circle cx="12" cy="12" r="6.5" fill="#f4f4f4" stroke="#9aa4b0" stroke-width="1.4"/><circle cx="12" cy="12" r="2.8" fill="#2a2a2a"/></svg>
<div class="a" style="left:19px;top:1077.1px;width:212px;height:50px;background:linear-gradient(180deg,#fbfbfb,#ebebeb);border:2px solid #c4c4c4;border-radius:5px"></div>
<div class="t" style="left:21px;width:214px;text-align:center;top:1093.3px;font-size:21px;color:#111">WebView</div>
<svg class="a" style="left:23.5px;top:1090.4px" width="24.5" height="24.5" viewBox="0 0 24 24"><circle cx="12" cy="12" r="10.5" fill="#2a94d8"/><circle cx="9" cy="8" r="6" fill="#7ccaf4" opacity="0.6"/><path d="M13 10 Q14 6 18 7 L21 9 Q21 13 19 14 Q17 18 15 20 Q13 17 13 14 Q10 13 11 11 Z" fill="#f4f8fa"/><path d="M4 8 Q6 6 8 8 Q6 10 4 10 Z" fill="#eef6fa"/></svg>
<div class="a" style="left:19px;top:1139.4px;width:212px;height:50px;background:linear-gradient(180deg,#fbfbfb,#ebebeb);border:2px solid #c4c4c4;border-radius:5px"></div>
<div class="t" style="left:21px;width:214px;text-align:center;top:1155.6px;font-size:21px;color:#111">DialSlider</div>
<svg class="a" style="left:23.5px;top:1152.7px" width="24.5" height="24.5" viewBox="0 0 24 24"><circle cx="12" cy="12" r="10.5" fill="#b4b4b4" stroke="#4a4a4a" stroke-width="1.6"/><circle cx="10.5" cy="10" r="6" fill="#d4d4d4" opacity="0.7"/></svg>
<div class="a" style="left:19px;top:1201.7px;width:212px;height:50px;background:linear-gradient(180deg,#fbfbfb,#ebebeb);border:2px solid #c4c4c4;border-radius:5px"></div>
<div class="t" style="left:21px;width:214px;text-align:center;top:1217.9px;font-size:21px;color:#111">VideoWidget</div>
<svg class="a" style="left:23.5px;top:1215.0px" width="24.5" height="24.5" viewBox="0 0 24 24"><rect x="2" y="9" width="20" height="13" fill="#2a70d0"/><rect x="2" y="3" width="20" height="5" fill="#fff" stroke="#222" stroke-width="1"/><path d="M4 3 L6 8 M8 3 L10 8 M12 3 L14 8 M16 3 L18 8" stroke="#222" stroke-width="1.5"/><path d="M10 13 L15 15.5 L10 18 Z" fill="#fff"/><rect x="2" y="9" width="20" height="2" fill="#1a4a9a"/></svg>
<div class="a" style="left:19px;top:1264.0px;width:212px;height:50px;background:linear-gradient(180deg,#fbfbfb,#ebebeb);border:2px solid #c4c4c4;border-radius:5px"></div>
<div class="t" style="left:21px;width:214px;text-align:center;top:1280.2px;font-size:21px;color:#111">Frame</div>
<svg class="a" style="left:23.5px;top:1277.3px" width="24.5" height="24.5" viewBox="0 0 24 24"><rect x="2" y="4" width="20" height="17" rx="2" fill="#d8d8dc" stroke="#9a9aa0" stroke-width="1.2"/><rect x="2.6" y="4.6" width="18.8" height="4" fill="#f4f4f6"/><path d="M2 9 H22" stroke="#9a9aa0" stroke-width="1"/></svg>
<div class="a" style="left:19px;top:1326.3px;width:212px;height:50px;background:linear-gradient(180deg,#fbfbfb,#ebebeb);border:2px solid #c4c4c4;border-radius:5px"></div>
<div class="t" style="left:21px;width:214px;text-align:center;top:1342.5px;font-size:21px;color:#111">LCDNumber</div>
<svg class="a" style="left:23.5px;top:1339.6px" width="24.5" height="24.5" viewBox="0 0 24 24"><rect x="1" y="6" width="22" height="16" fill="#4a5a6a"/><rect x="3" y="3" width="18" height="3" fill="#f8d090"/><text x="12" y="18" text-anchor="middle" font-family="Liberation Mono" font-weight="bold" font-size="9" fill="#c8b070">LCD</text></svg>
</div>
<svg class="a" style="left:36.0px;top:24.5px" width="34.0" height="32.0" viewBox="0 0 48 48" preserveAspectRatio="none"><path d="M12 8 Q12 4 16 4 H44 Q46 4 46 7 V44 Q46 47 43 47 H15 Q12 47 12 44 Z" fill="#e8e8e8" stroke="#333" stroke-width="2.5"/>
<path d="M4 28 L14 3 H42 L32 28 Z" fill="#058282" stroke="#0a2020" stroke-width="2"/>
<path d="M14 5 H40 L39 8 H13 Z" fill="#4a9a9a"/>
<path d="M16 10 H30 L29 14 H15 Z" fill="#8a8080"/>
<path d="M4 28 H32 L30 33 H4 Z" fill="#1a3a3a"/></svg>
<svg class="a" style="left:2995.0px;top:25.0px" width="32" height="32" viewBox="0 0 32 32"><path d="M5.5 15.5 H26" stroke="#1a1a1a" stroke-width="1.6"/></svg>
<svg class="a" style="left:3092.0px;top:25.0px" width="32" height="32" viewBox="0 0 32 32"><rect x="6" y="10" width="16" height="16" rx="2.5" fill="none" stroke="#1a1a1a" stroke-width="1.6"/><path d="M10 10 V8.5 Q10 6 12.5 6 H23 Q26 6 26 9 V19.5 Q26 22 23.5 22 H22" fill="none" stroke="#1a1a1a" stroke-width="1.6"/></svg>
<svg class="a" style="left:3192.0px;top:25.0px" width="32" height="32" viewBox="0 0 32 32"><path d="M6 6.5 L26 26.5 M26 6.5 L6 26.5" stroke="#1a1a1a" stroke-width="1.6"/></svg>
<div class="a" style="left:43.0px;top:133.0px;width:2.0px;height:2.0px;background:#b0b0b0"></div>
<div class="a" style="left:43.0px;top:138.0px;width:2.0px;height:2.0px;background:#b0b0b0"></div>
<div class="a" style="left:43.0px;top:143.0px;width:2.0px;height:2.0px;background:#b0b0b0"></div>
<div class="a" style="left:43.0px;top:148.0px;width:2.0px;height:2.0px;background:#b0b0b0"></div>
<div class="a" style="left:43.0px;top:153.0px;width:2.0px;height:2.0px;background:#b0b0b0"></div>
<div class="a" style="left:43.0px;top:158.0px;width:2.0px;height:2.0px;background:#b0b0b0"></div>
<div class="a" style="left:48.5px;top:133.0px;width:2.0px;height:2.0px;background:#b0b0b0"></div>
<div class="a" style="left:48.5px;top:138.0px;width:2.0px;height:2.0px;background:#b0b0b0"></div>
<div class="a" style="left:48.5px;top:143.0px;width:2.0px;height:2.0px;background:#b0b0b0"></div>
<div class="a" style="left:48.5px;top:148.0px;width:2.0px;height:2.0px;background:#b0b0b0"></div>
<div class="a" style="left:48.5px;top:153.0px;width:2.0px;height:2.0px;background:#b0b0b0"></div>
<div class="a" style="left:48.5px;top:158.0px;width:2.0px;height:2.0px;background:#b0b0b0"></div>
<div class="a" style="left:1338.0px;top:133.0px;width:2.0px;height:2.0px;background:#b8b8b8"></div>
<div class="a" style="left:1338.0px;top:138.0px;width:2.0px;height:2.0px;background:#b8b8b8"></div>
<div class="a" style="left:1338.0px;top:143.0px;width:2.0px;height:2.0px;background:#b8b8b8"></div>
<div class="a" style="left:1338.0px;top:148.0px;width:2.0px;height:2.0px;background:#b8b8b8"></div>
<div class="a" style="left:1338.0px;top:153.0px;width:2.0px;height:2.0px;background:#b8b8b8"></div>
<div class="a" style="left:1338.0px;top:158.0px;width:2.0px;height:2.0px;background:#b8b8b8"></div>
<div class="a" style="left:1343.0px;top:133.0px;width:2.0px;height:2.0px;background:#b8b8b8"></div>
<div class="a" style="left:1343.0px;top:138.0px;width:2.0px;height:2.0px;background:#b8b8b8"></div>
<div class="a" style="left:1343.0px;top:143.0px;width:2.0px;height:2.0px;background:#b8b8b8"></div>
<div class="a" style="left:1343.0px;top:148.0px;width:2.0px;height:2.0px;background:#b8b8b8"></div>
<div class="a" style="left:1343.0px;top:153.0px;width:2.0px;height:2.0px;background:#b8b8b8"></div>
<div class="a" style="left:1343.0px;top:158.0px;width:2.0px;height:2.0px;background:#b8b8b8"></div>
<div class="a" style="left:128.5px;top:126.0px;width:2.0px;height:42.0px;background:#d4d4d4;border-right:1px solid #fafafa"></div>
<div class="a" style="left:207.0px;top:126.0px;width:2.0px;height:42.0px;background:#d4d4d4;border-right:1px solid #fafafa"></div>
<div class="a" style="left:286.5px;top:126.0px;width:2.0px;height:42.0px;background:#d4d4d4;border-right:1px solid #fafafa"></div>
<div class="a" style="left:365.5px;top:126.0px;width:2.0px;height:42.0px;background:#d4d4d4;border-right:1px solid #fafafa"></div>
<div class="a" style="left:444.5px;top:126.0px;width:2.0px;height:42.0px;background:#d4d4d4;border-right:1px solid #fafafa"></div>
<div class="a" style="left:524.0px;top:126.0px;width:2.0px;height:42.0px;background:#d4d4d4;border-right:1px solid #fafafa"></div>
<div class="a" style="left:603.0px;top:126.0px;width:2.0px;height:42.0px;background:#d4d4d4;border-right:1px solid #fafafa"></div>
<div class="a" style="left:682.0px;top:126.0px;width:2.0px;height:42.0px;background:#d4d4d4;border-right:1px solid #fafafa"></div>
<div class="a" style="left:761.0px;top:126.0px;width:2.0px;height:42.0px;background:#d4d4d4;border-right:1px solid #fafafa"></div>
<div class="a" style="left:840.0px;top:126.0px;width:2.0px;height:42.0px;background:#d4d4d4;border-right:1px solid #fafafa"></div>
<div class="a" style="left:918.6px;top:126.0px;width:2.0px;height:42.0px;background:#d4d4d4;border-right:1px solid #fafafa"></div>
<div class="a" style="left:998.0px;top:126.0px;width:2.0px;height:42.0px;background:#d4d4d4;border-right:1px solid #fafafa"></div>
<div class="a" style="left:1077.0px;top:126.0px;width:2.0px;height:42.0px;background:#d4d4d4;border-right:1px solid #fafafa"></div>
<div class="a" style="left:1156.0px;top:126.0px;width:2.0px;height:42.0px;background:#d4d4d4;border-right:1px solid #fafafa"></div>
<div class="a" style="left:1235.0px;top:126.0px;width:2.0px;height:42.0px;background:#d4d4d4;border-right:1px solid #fafafa"></div>
<div class="a" style="left:1314.0px;top:126.0px;width:2.0px;height:42.0px;background:#d4d4d4;border-right:1px solid #fafafa"></div>
<svg class="a" style="left:70.6px;top:123.5px" width="38.7" height="45.5" viewBox="0 0 48 48" preserveAspectRatio="none"><defs><linearGradient id="g1" x1="0" y1="0" x2="0" y2="1"><stop offset="0" stop-color="#fafbfd"/><stop offset="1" stop-color="#e3e4e8"/></linearGradient></defs>
<path d="M1 1.5 H35 L47 13.5 V45 Q47 47 45 47 H3 Q1 47 1 45 Z" fill="url(#g1)" stroke="#b4bddd" stroke-width="1.6"/>
<path d="M35 1.5 V13.5 H47 Z" fill="#c8d6f2" stroke="#a9b5dc" stroke-width="1.2"/>
<path d="M46 14 V46 H3" fill="none" stroke="#9ea2c6" stroke-width="2.4"/></svg>
<svg class="a" style="left:144.6px;top:129.0px" width="46.9" height="40.7" viewBox="0 0 48 48" preserveAspectRatio="none"><defs><linearGradient id="g2" x1="0" y1="0" x2="0" y2="1"><stop offset="0" stop-color="#fff2a8"/><stop offset="1" stop-color="#e9b820"/></linearGradient>
<linearGradient id="g3" x1="0" y1="0" x2="0" y2="1"><stop offset="0" stop-color="#fff7b8"/><stop offset="0.5" stop-color="#fbdf60"/><stop offset="1" stop-color="#f1c21a"/></linearGradient></defs>
<path d="M1 7 Q1 3 5 3 H16 L20 7 H37 Q40 7 40 10 V36 L5 44 Z" fill="url(#g2)" stroke="#d8a810" stroke-width="1.2"/>
<path d="M9 18 L47 14 L39 38 L4 47 Z" fill="url(#g3)" stroke="#d8a810" stroke-width="1.2"/></svg>
<svg class="a" style="left:227.4px;top:126.0px" width="40.6" height="39.7" viewBox="0 0 48 48" preserveAspectRatio="none"><defs><linearGradient id="g4" x1="0" y1="0" x2="1" y2="0"><stop offset="0" stop-color="#2a8fd0"/><stop offset="0.12" stop-color="#4fb4e8"/><stop offset="0.88" stop-color="#4fb4e8"/><stop offset="1" stop-color="#2a8fd0"/></linearGradient>
<linearGradient id="g5" x1="0" y1="0" x2="0" y2="1"><stop offset="0" stop-color="#6a6a6a"/><stop offset="1" stop-color="#b8b8b8"/></linearGradient></defs>
<rect x="2" y="2" width="44" height="44" rx="5" fill="url(#g4)"/>
<rect x="10" y="2" width="28" height="17" fill="url(#g5)"/>
<rect x="29" y="6" width="5" height="10" fill="#56b6ea"/>
<rect x="9" y="27" width="30" height="19" fill="#e4e4e6"/>
<rect x="9" y="27" width="30" height="3" fill="#f4f4f4"/></svg>
<svg class="a" style="left:301.4px;top:121.0px" width="50.1" height="49.8" viewBox="0 0 48 48" preserveAspectRatio="none"><path d="M3 6 Q3 2 7 2 H37 L46 11 V42 Q46 46 42 46 H7 Q3 46 3 42 Z" fill="#3fa6dc" stroke="#2b8cc6" stroke-width="1"/>
<rect x="11" y="2" width="24" height="14" fill="#ffffff"/>
<rect x="14" y="4" width="5" height="9" fill="#3fa6dc"/>
<rect x="8" y="26" width="33" height="18" fill="#fdfdfd"/>
<rect x="8" y="42" width="33" height="2.5" fill="#e8a035"/>
<path d="M12 31 H34 M12 36 H30" stroke="#c0c0c0" stroke-width="1.2"/>
<path d="M30 40 L41 23 L46 26 L35 43 Z" fill="#f0a020"/>
<path d="M41 23 L43 20 L48 23 L46 26 Z" fill="#e8453c"/>
<path d="M30 40 L35 43 L31 44 Z" fill="#333"/></svg>
<svg class="a" style="left:385.7px;top:126.0px" width="40.6" height="40.0" viewBox="0 0 48 48" preserveAspectRatio="none"><defs><linearGradient id="g6" x1="0" y1="0" x2="0" y2="1"><stop offset="0" stop-color="#6cc6f0"/><stop offset="1" stop-color="#1a84c8"/></linearGradient></defs>
<circle cx="24" cy="24" r="23" fill="url(#g6)"/>
<path d="M15 27 A10 10 0 1 1 27 34" fill="none" stroke="#fff" stroke-width="4.5"/>
<path d="M8 24 L15 31 L21 24 Z" fill="#fff"/></svg>
<svg class="a" style="left:466.4px;top:121.4px" width="37.4" height="47.8" viewBox="0 0 48 48" preserveAspectRatio="none"><path d="M8 1 L32 38 M40 1 L16 38" stroke="#8a8a8a" stroke-width="3.2" fill="none"/>
<path d="M8 1 L32 38 M40 1 L16 38" stroke="#f4f4f4" stroke-width="1.2" fill="none"/>
<circle cx="10" cy="40" r="7" fill="#5f92c8" stroke="#4a78b0" stroke-width="1"/>
<circle cx="38" cy="40" r="7" fill="#5f92c8" stroke="#4a78b0" stroke-width="1"/>
<circle cx="10" cy="40" r="2" fill="#e8f0f8"/><circle cx="38" cy="40" r="2" fill="#e8f0f8"/>
<circle cx="24" cy="20" r="1.8" fill="#777"/></svg>
<svg class="a" style="left:544.0px;top:121.4px" width="40.0" height="47.8" viewBox="0 0 48 48" preserveAspectRatio="none"><path d="M2 1 H22 L29 8 V41 H2 Z" fill="#fafafa" stroke="#b0b0b0" stroke-width="1"/>
<path d="M11 8 H32 L41 17 V47 H11 Z" fill="#fdfdfd" stroke="#9a9a9a" stroke-width="1.2"/>
<path d="M32 8 V17 H41" fill="#eee" stroke="#9a9a9a" stroke-width="1"/><path d="M15 22.0 H37" stroke="#b8c8e0" stroke-width="1.5"/><path d="M15 26.2 H37" stroke="#b8c8e0" stroke-width="1.5"/><path d="M15 30.4 H37" stroke="#b8c8e0" stroke-width="1.5"/><path d="M15 34.6 H37" stroke="#b8c8e0" stroke-width="1.5"/><path d="M15 38.8 H37" stroke="#b8c8e0" stroke-width="1.5"/><path d="M15 43.0 H37" stroke="#b8c8e0" stroke-width="1.5"/></svg>
<svg class="a" style="left:618.0px;top:121.4px" width="45.0" height="47.8" viewBox="0 0 48 48" preserveAspectRatio="none"><rect x="1" y="2" width="32" height="36" rx="2" fill="#d7a94e" stroke="#b48a38" stroke-width="1"/>
<rect x="10" y="0" width="14" height="6" rx="1" fill="#6c6c6c"/>
<path d="M16 10 H37 L46 19 V47 H16 Z" fill="#fdfdfd" stroke="#9a9a9a" stroke-width="1.2"/>
<path d="M37 10 V19 H46" fill="#eee" stroke="#9a9a9a" stroke-width="1"/><path d="M20 26.0 H42" stroke="#b8c8e0" stroke-width="1.5"/><path d="M20 30.2 H42" stroke="#b8c8e0" stroke-width="1.5"/><path d="M20 34.4 H42" stroke="#b8c8e0" stroke-width="1.5"/><path d="M20 38.6 H42" stroke="#b8c8e0" stroke-width="1.5"/><path d="M20 42.8 H42" stroke="#b8c8e0" stroke-width="1.5"/></svg>
<svg class="a" style="left:700.0px;top:124.0px" width="43.7" height="44.2" viewBox="0 0 48 48" preserveAspectRatio="none"><rect x="1" y="1" width="46" height="46" fill="#f6f6f6" stroke="#9c9c9c" stroke-width="2"/>
<path d="M5 5 H43" stroke="#d8d8d8" stroke-width="1"/>
<text x="24" y="41" text-anchor="middle" font-family="Liberation Serif" font-style="italic" font-size="40" fill="#3a6fb8">A</text></svg>
<svg class="a" style="left:777.0px;top:122.0px" width="47.0" height="47.0" viewBox="0 0 48 48" preserveAspectRatio="none"><defs><radialGradient id="g7" cx="0.45" cy="0.35" r="0.7"><stop offset="0" stop-color="#eaf6fb"/><stop offset="1" stop-color="#a9cbd8"/></radialGradient></defs>
<rect x="8" y="3" width="38" height="44" fill="#e6e6e6" stroke="#cfcfcf" stroke-width="1"/>
<path d="M14 37 H40 M14 41 H40" stroke="#c4c4c4" stroke-width="2"/>
<path d="M22 22 L44 44" stroke="#333" stroke-width="6" stroke-linecap="round"/>
<circle cx="15" cy="15" r="13" fill="url(#g7)" stroke="#9a9a9a" stroke-width="2.5"/>
<path d="M8 14 Q15 9 22 13" stroke="#fff" stroke-width="2" fill="none" opacity="0.8"/></svg>
<svg class="a" style="left:856.9px;top:122.5px" width="44.6" height="46.5" viewBox="0 0 48 48" preserveAspectRatio="none"><path d="M12 10 L30 2 L34 14 L16 20 Z" fill="#eef4ff" stroke="#8ea6d8" stroke-width="1"/>
<path d="M4 22 L30 12 L44 22 L44 34 L18 44 L4 34 Z" fill="#c8d8fa" stroke="#7b96d6" stroke-width="1"/>
<path d="M10 24 L30 16 L40 23 L20 31 Z" fill="#3b7ae0"/>
<path d="M4 26 L18 36 V44 L4 34 Z" fill="#a8c0f0"/>
<path d="M24 38 L44 30 L48 38 L30 46 Z" fill="#e8eefc" stroke="#7b96d6" stroke-width="1"/>
<path d="M28 40 L44 34 M30 43 L46 37" stroke="#7b96d6" stroke-width="1"/>
<circle cx="12" cy="27" r="1.5" fill="#e04040"/></svg>
<svg class="a" style="left:934.7px;top:122.5px" width="47.8" height="45.5" viewBox="0 0 48 48" preserveAspectRatio="none"><defs><radialGradient id="g8" cx="0.4" cy="0.35" r="0.7"><stop offset="0" stop-color="#e0ead8"/><stop offset="1" stop-color="#7f9a74"/></radialGradient>
<radialGradient id="g9" cx="0.6" cy="0.45" r="0.7"><stop offset="0" stop-color="#fff4d0"/><stop offset="1" stop-color="#f49070"/></radialGradient></defs>
<path d="M36.94 26.52 L36.94 29.48 L33.32 30.30 L32.75 32.61 L35.57 35.03 L34.20 37.64 L30.61 36.69 L29.03 38.47 L30.41 41.92 L27.97 43.60 L25.24 41.09 L23.01 41.93 L22.63 45.63 L19.70 45.99 L18.44 42.49 L16.08 42.20 L14.02 45.30 L11.26 44.25 L11.77 40.57 L9.81 39.22 L6.55 41.00 L4.59 38.79 L6.76 35.77 L5.65 33.66 L1.94 33.73 L1.23 30.86 L4.55 29.19 L4.55 26.81 L1.23 25.14 L1.94 22.27 L5.65 22.34 L6.76 20.23 L4.59 17.21 L6.55 15.00 L9.81 16.78 L11.77 15.43 L11.26 11.75 L14.02 10.70 L16.08 13.80 L18.44 13.51 L19.70 10.01 L22.63 10.37 L23.01 14.07 L25.24 14.91 L27.97 12.40 L30.41 14.08 L29.03 17.53 L30.61 19.31 L34.20 18.36 L35.57 20.97 L32.75 23.39 L33.32 25.70 Z" fill="url(#g8)" stroke="#7a9070" stroke-width="0.8"/>
<circle cx="19" cy="28" r="8" fill="#f2f2f0" stroke="#6f8a66" stroke-width="1.5"/>
<path d="M46.44 17.15 L46.44 19.85 L42.83 20.56 L42.32 22.64 L45.19 24.94 L43.93 27.34 L40.41 26.29 L38.99 27.89 L40.46 31.26 L38.23 32.80 L35.59 30.24 L33.60 30.99 L33.33 34.66 L30.64 34.99 L29.50 31.49 L27.38 31.23 L25.43 34.36 L22.90 33.40 L23.52 29.77 L21.76 28.56 L18.59 30.42 L16.79 28.39 L19.02 25.47 L18.03 23.58 L14.36 23.75 L13.71 21.12 L17.04 19.57 L17.04 17.43 L13.71 15.88 L14.36 13.25 L18.03 13.42 L19.02 11.53 L16.79 8.61 L18.59 6.58 L21.76 8.44 L23.52 7.23 L22.90 3.60 L25.43 2.64 L27.38 5.77 L29.50 5.51 L30.64 2.01 L33.33 2.34 L33.60 6.01 L35.59 6.76 L38.23 4.20 L40.46 5.74 L38.99 9.11 L40.41 10.71 L43.93 9.66 L45.19 12.06 L42.32 14.36 L42.83 16.44 Z" fill="url(#g9)" stroke="#e08a64" stroke-width="0.8"/>
<circle cx="30" cy="18.5" r="6" fill="#d8e6d0" stroke="#c8704a" stroke-width="1.4"/></svg>
<svg class="a" style="left:1014.0px;top:124.0px" width="46.0" height="44.0" viewBox="0 0 48 48" preserveAspectRatio="none"><defs><linearGradient id="g10" x1="0" y1="0" x2="0" y2="1"><stop offset="0" stop-color="#e8ffb0"/><stop offset="0.5" stop-color="#9fdc10"/><stop offset="1" stop-color="#6cb800"/></linearGradient>
<filter id="f11" x="-30%" y="-30%" width="160%" height="160%"><feGaussianBlur stdDeviation="1.6"/></filter></defs>
<g filter="url(#f11)" opacity="0.5"><path d="M6 24 H40 M28 10 L42 24 L28 38" stroke="#b8e860" stroke-width="7" fill="none" stroke-linecap="round" stroke-linejoin="round"/></g>
<path d="M8 24 H40 M28 11 L41 24 L28 37" stroke="url(#g10)" stroke-width="6" fill="none" stroke-linecap="round" stroke-linejoin="round"/></svg>
<svg class="a" style="left:1096.0px;top:124.5px" width="42.8" height="43.0" viewBox="0 0 48 48" preserveAspectRatio="none"><defs><linearGradient id="g12" x1="0" y1="0" x2="0" y2="1"><stop offset="0" stop-color="#a8ccf8"/><stop offset="0.48" stop-color="#5f9ef0"/><stop offset="0.52" stop-color="#3d84ea"/><stop offset="1" stop-color="#3a86ee"/></linearGradient></defs>
<circle cx="24" cy="24" r="22.5" fill="url(#g12)" stroke="#8e9eb8" stroke-width="1.3"/>
<path d="M17 12 L36 24 L17 36 Z" fill="#fff"/></svg>
<svg class="a" style="left:1173.0px;top:121.5px" width="46.6" height="46.5" viewBox="0 0 48 48" preserveAspectRatio="none"><defs><radialGradient id="g13" cx="0.38" cy="0.28" r="0.8"><stop offset="0" stop-color="#c8f0fc"/><stop offset="0.4" stop-color="#3eaee0"/><stop offset="1" stop-color="#1468a0"/></radialGradient></defs>
<circle cx="24" cy="24" r="23" fill="url(#g13)"/>
<path d="M25 21 Q24 16 28 14 L31 11 Q34 8 38 10 L40 13 Q43 12 45 16 Q44 19 41 20 L44 23 Q46 27 42 29 Q39 31 38 35 Q35 41 32 44 Q30 40 30 35 Q28 31 26 29 Q22 27 23 23 Z" fill="#f6f9fa"/>
<path d="M30 3.5 Q35 3 39 6 Q35 8 31 7 Z" fill="#eef6fa"/>
<path d="M9 14 Q13 12 14 16 Q11 19 8 17 Z" fill="#eef6fa"/>
<path d="M2.5 29 Q7 33 9 43 Q4 38 2 33 Z" fill="#e4f0f4"/>
<path d="M40 22 L46 20 Q47 24 45 27 Z" fill="#f0f6f8"/></svg>
<svg class="a" style="left:1252.0px;top:122.7px" width="46.6" height="46.6" viewBox="0 0 48 48" preserveAspectRatio="none"><defs><radialGradient id="g14" cx="0.5" cy="0.5" r="0.5"><stop offset="0" stop-color="#f4f4f4"/><stop offset="0.7" stop-color="#c8c8c8"/><stop offset="1" stop-color="#9a9a9a"/></radialGradient></defs>
<circle cx="24" cy="24" r="23" fill="url(#g14)"/>
<path d="M15 13 A14 14 0 1 0 33 13" fill="none" stroke="#2a2a2a" stroke-width="4"/>
<path d="M24 6 V22" stroke="#2a2a2a" stroke-width="4"/></svg>
<svg class="a" style="left:2936.5px;top:129.0px" width="47.0" height="40.0" viewBox="0 0 48 48" preserveAspectRatio="none"><defs><linearGradient id="g15" x1="0" y1="0" x2="0" y2="1"><stop offset="0" stop-color="#fff2a8"/><stop offset="1" stop-color="#e9b820"/></linearGradient>
<linearGradient id="g16" x1="0" y1="0" x2="0" y2="1"><stop offset="0" stop-color="#fff7b8"/><stop offset="0.5" stop-color="#fbdf60"/><stop offset="1" stop-color="#f1c21a"/></linearGradient></defs>
<path d="M1 7 Q1 3 5 3 H16 L20 7 H37 Q40 7 40 10 V36 L5 44 Z" fill="url(#g15)" stroke="#d8a810" stroke-width="1.2"/>
<path d="M9 18 L47 14 L39 38 L4 47 Z" fill="url(#g16)" stroke="#d8a810" stroke-width="1.2"/></svg>
<svg class="a" style="left:3002.0px;top:122.5px" width="48.0" height="45.5" viewBox="0 0 48 48" preserveAspectRatio="none"><defs><radialGradient id="g17" cx="0.4" cy="0.35" r="0.7"><stop offset="0" stop-color="#e0ead8"/><stop offset="1" stop-color="#7f9a74"/></radialGradient>
<radialGradient id="g18" cx="0.6" cy="0.45" r="0.7"><stop offset="0" stop-color="#fff4d0"/><stop offset="1" stop-color="#f49070"/></radialGradient></defs>
<path d="M36.94 26.52 L36.94 29.48 L33.32 30.30 L32.75 32.61 L35.57 35.03 L34.20 37.64 L30.61 36.69 L29.03 38.47 L30.41 41.92 L27.97 43.60 L25.24 41.09 L23.01 41.93 L22.63 45.63 L19.70 45.99 L18.44 42.49 L16.08 42.20 L14.02 45.30 L11.26 44.25 L11.77 40.57 L9.81 39.22 L6.55 41.00 L4.59 38.79 L6.76 35.77 L5.65 33.66 L1.94 33.73 L1.23 30.86 L4.55 29.19 L4.55 26.81 L1.23 25.14 L1.94 22.27 L5.65 22.34 L6.76 20.23 L4.59 17.21 L6.55 15.00 L9.81 16.78 L11.77 15.43 L11.26 11.75 L14.02 10.70 L16.08 13.80 L18.44 13.51 L19.70 10.01 L22.63 10.37 L23.01 14.07 L25.24 14.91 L27.97 12.40 L30.41 14.08 L29.03 17.53 L30.61 19.31 L34.20 18.36 L35.57 20.97 L32.75 23.39 L33.32 25.70 Z" fill="url(#g17)" stroke="#7a9070" stroke-width="0.8"/>
<circle cx="19" cy="28" r="8" fill="#f2f2f0" stroke="#6f8a66" stroke-width="1.5"/>
<path d="M46.44 17.15 L46.44 19.85 L42.83 20.56 L42.32 22.64 L45.19 24.94 L43.93 27.34 L40.41 26.29 L38.99 27.89 L40.46 31.26 L38.23 32.80 L35.59 30.24 L33.60 30.99 L33.33 34.66 L30.64 34.99 L29.50 31.49 L27.38 31.23 L25.43 34.36 L22.90 33.40 L23.52 29.77 L21.76 28.56 L18.59 30.42 L16.79 28.39 L19.02 25.47 L18.03 23.58 L14.36 23.75 L13.71 21.12 L17.04 19.57 L17.04 17.43 L13.71 15.88 L14.36 13.25 L18.03 13.42 L19.02 11.53 L16.79 8.61 L18.59 6.58 L21.76 8.44 L23.52 7.23 L22.90 3.60 L25.43 2.64 L27.38 5.77 L29.50 5.51 L30.64 2.01 L33.33 2.34 L33.60 6.01 L35.59 6.76 L38.23 4.20 L40.46 5.74 L38.99 9.11 L40.41 10.71 L43.93 9.66 L45.19 12.06 L42.32 14.36 L42.83 16.44 Z" fill="url(#g18)" stroke="#e08a64" stroke-width="0.8"/>
<circle cx="30" cy="18.5" r="6" fill="#d8e6d0" stroke="#c8704a" stroke-width="1.4"/></svg>
<svg class="a" style="left:3069.0px;top:124.0px" width="46.0" height="44.0" viewBox="0 0 48 48" preserveAspectRatio="none"><defs><linearGradient id="g19" x1="0" y1="0" x2="0" y2="1"><stop offset="0" stop-color="#e8ffb0"/><stop offset="0.5" stop-color="#9fdc10"/><stop offset="1" stop-color="#6cb800"/></linearGradient>
<filter id="f20" x="-30%" y="-30%" width="160%" height="160%"><feGaussianBlur stdDeviation="1.6"/></filter></defs>
<g filter="url(#f20)" opacity="0.5"><path d="M6 24 H40 M28 10 L42 24 L28 38" stroke="#b8e860" stroke-width="7" fill="none" stroke-linecap="round" stroke-linejoin="round"/></g>
<path d="M8 24 H40 M28 11 L41 24 L28 37" stroke="url(#g19)" stroke-width="6" fill="none" stroke-linecap="round" stroke-linejoin="round"/></svg>
<svg class="a" style="left:3136.0px;top:124.0px" width="42.0" height="43.0" viewBox="0 0 48 48" preserveAspectRatio="none"><defs><linearGradient id="g21" x1="0" y1="0" x2="0" y2="1"><stop offset="0" stop-color="#a8ccf8"/><stop offset="0.48" stop-color="#5f9ef0"/><stop offset="0.52" stop-color="#3d84ea"/><stop offset="1" stop-color="#3a86ee"/></linearGradient></defs>
<circle cx="24" cy="24" r="22.5" fill="url(#g21)" stroke="#8e9eb8" stroke-width="1.3"/>
<path d="M17 12 L36 24 L17 36 Z" fill="#fff"/></svg>
<svg class="a" style="left:3201.0px;top:121.0px" width="44.0" height="46.0" viewBox="0 0 48 48" preserveAspectRatio="none"><defs><radialGradient id="g22" cx="0.38" cy="0.28" r="0.8"><stop offset="0" stop-color="#c8f0fc"/><stop offset="0.4" stop-color="#3eaee0"/><stop offset="1" stop-color="#1468a0"/></radialGradient></defs>
<circle cx="24" cy="24" r="23" fill="url(#g22)"/>
<path d="M25 21 Q24 16 28 14 L31 11 Q34 8 38 10 L40 13 Q43 12 45 16 Q44 19 41 20 L44 23 Q46 27 42 29 Q39 31 38 35 Q35 41 32 44 Q30 40 30 35 Q28 31 26 29 Q22 27 23 23 Z" fill="#f6f9fa"/>
<path d="M30 3.5 Q35 3 39 6 Q35 8 31 7 Z" fill="#eef6fa"/>
<path d="M9 14 Q13 12 14 16 Q11 19 8 17 Z" fill="#eef6fa"/>
<path d="M2.5 29 Q7 33 9 43 Q4 38 2 33 Z" fill="#e4f0f4"/>
<path d="M40 22 L46 20 Q47 24 45 27 Z" fill="#f0f6f8"/></svg>
<svg class="a" style="left:1164.5px;top:192.0px" width="18" height="18" viewBox="0 0 18 18"><rect x="0.75" y="0.75" width="16.5" height="16.5" rx="2.5" fill="none" stroke="#8a8a8a" stroke-width="1.5"/><rect x="4" y="7.5" width="6.5" height="6" fill="none" stroke="#6a6a6a" stroke-width="1.4"/><path d="M7 7.5 V4.5 H13.5 V10.5 H10.5" fill="none" stroke="#6a6a6a" stroke-width="1.4"/></svg>
<svg class="a" style="left:1188.5px;top:192.0px" width="18" height="18" viewBox="0 0 18 18"><rect x="0.75" y="0.75" width="16.5" height="16.5" rx="2.5" fill="none" stroke="#8a8a8a" stroke-width="1.5"/><path d="M4.5 4.5 L13.5 13.5 M13.5 4.5 L4.5 13.5" stroke="#505050" stroke-width="2.6"/></svg>
<svg class="a" style="left:2535.0px;top:192.0px" width="18" height="18" viewBox="0 0 18 18"><rect x="0.75" y="0.75" width="16.5" height="16.5" rx="2.5" fill="none" stroke="#8a8a8a" stroke-width="1.5"/><rect x="4" y="7.5" width="6.5" height="6" fill="none" stroke="#6a6a6a" stroke-width="1.4"/><path d="M7 7.5 V4.5 H13.5 V10.5 H10.5" fill="none" stroke="#6a6a6a" stroke-width="1.4"/></svg>
<svg class="a" style="left:2559.0px;top:192.0px" width="18" height="18" viewBox="0 0 18 18"><rect x="0.75" y="0.75" width="16.5" height="16.5" rx="2.5" fill="none" stroke="#8a8a8a" stroke-width="1.5"/><path d="M4.5 4.5 L13.5 13.5 M13.5 4.5 L4.5 13.5" stroke="#505050" stroke-width="2.6"/></svg>
<svg class="a" style="left:3216.0px;top:192.0px" width="18" height="18" viewBox="0 0 18 18"><rect x="0.75" y="0.75" width="16.5" height="16.5" rx="2.5" fill="none" stroke="#8a8a8a" stroke-width="1.5"/><rect x="4" y="7.5" width="6.5" height="6" fill="none" stroke="#6a6a6a" stroke-width="1.4"/><path d="M7 7.5 V4.5 H13.5 V10.5 H10.5" fill="none" stroke="#6a6a6a" stroke-width="1.4"/></svg>
<svg class="a" style="left:3240.0px;top:192.0px" width="18" height="18" viewBox="0 0 18 18"><rect x="0.75" y="0.75" width="16.5" height="16.5" rx="2.5" fill="none" stroke="#8a8a8a" stroke-width="1.5"/><path d="M4.5 4.5 L13.5 13.5 M13.5 4.5 L4.5 13.5" stroke="#505050" stroke-width="2.6"/></svg>
<svg class="a" style="left:347.0px;top:266.0px" width="18" height="18" viewBox="0 0 18 18"><rect x="0.75" y="0.75" width="16.5" height="16.5" rx="2.5" fill="none" stroke="#8a8a8a" stroke-width="1.5"/><rect x="4" y="7.5" width="6.5" height="6" fill="none" stroke="#6a6a6a" stroke-width="1.4"/><path d="M7 7.5 V4.5 H13.5 V10.5 H10.5" fill="none" stroke="#6a6a6a" stroke-width="1.4"/></svg>
<svg class="a" style="left:371.0px;top:266.0px" width="18" height="18" viewBox="0 0 18 18"><rect x="0.75" y="0.75" width="16.5" height="16.5" rx="2.5" fill="none" stroke="#8a8a8a" stroke-width="1.5"/><path d="M4.5 4.5 L13.5 13.5 M13.5 4.5 L4.5 13.5" stroke="#505050" stroke-width="2.6"/></svg>
<svg class="a" style="left:0;top:0;overflow:visible" width="1" height="1"><polygon points="370.0,309.5 384.0,309.5 377,302.5" fill="#555"/></svg>
<svg class="a" style="left:0;top:0;overflow:visible" width="1" height="1"><polygon points="370.0,1631.5 384.0,1631.5 377,1638.5" fill="#555"/></svg>
<svg class="a" style="left:0;top:0;overflow:visible" width="1" height="1"><polygon points="1189.0,275.5 1203.0,275.5 1196,268.5" fill="#555"/></svg>
<svg class="a" style="left:0;top:0;overflow:visible" width="1" height="1"><polygon points="1189.0,1603.5 1203.0,1603.5 1196,1610.5" fill="#555"/></svg>
<svg class="a" style="left:0;top:0;overflow:visible" width="1" height="1"><polygon points="421.5,1629.0 421.5,1643.0 414.5,1636" fill="#555"/></svg>
<svg class="a" style="left:0;top:0;overflow:visible" width="1" height="1"><polygon points="1163.5,1629.0 1163.5,1643.0 1170.5,1636" fill="#555"/></svg>
<svg class="a" style="left:0;top:0;overflow:visible" width="1" height="1"><polygon points="2558.0,294.5 2572.0,294.5 2565,287.5" fill="#555"/></svg>
<svg class="a" style="left:0;top:0;overflow:visible" width="1" height="1"><polygon points="2558.0,1645.5 2572.0,1645.5 2565,1652.5" fill="#555"/></svg>
<svg class="a" style="left:0;top:0;overflow:visible" width="1" height="1"><polygon points="1239.5,1670.0 1239.5,1684.0 1232.5,1677" fill="#555"/></svg>
<svg class="a" style="left:0;top:0;overflow:visible" width="1" height="1"><polygon points="2532.5,1670.0 2532.5,1684.0 2539.5,1677" fill="#555"/></svg>
<svg class="a" style="left:0;top:0;overflow:visible" width="1" height="1"><polygon points="3222.5,309.0 3234.5,309.0 3228.5,303.0" fill="#555"/></svg>
<svg class="a" style="left:0;top:0;overflow:visible" width="1" height="1"><polygon points="3222.5,1603.0 3234.5,1603.0 3228.5,1609.0" fill="#555"/></svg>
<div class="a" style="left:59.0px;top:269.0px;width:2.0px;height:2.0px;background:#c4c4c4"></div>
<div class="a" style="left:64.0px;top:269.0px;width:2.0px;height:2.0px;background:#c4c4c4"></div>
<div class="a" style="left:69.0px;top:269.0px;width:2.0px;height:2.0px;background:#c4c4c4"></div>
<div class="a" style="left:74.0px;top:269.0px;width:2.0px;height:2.0px;background:#c4c4c4"></div>
<div class="a" style="left:79.0px;top:269.0px;width:2.0px;height:2.0px;background:#c4c4c4"></div>
<div class="a" style="left:84.0px;top:269.0px;width:2.0px;height:2.0px;background:#c4c4c4"></div>
<div class="a" style="left:59.0px;top:274.0px;width:2.0px;height:2.0px;background:#c4c4c4"></div>
<div class="a" style="left:64.0px;top:274.0px;width:2.0px;height:2.0px;background:#c4c4c4"></div>
<div class="a" style="left:69.0px;top:274.0px;width:2.0px;height:2.0px;background:#c4c4c4"></div>
<div class="a" style="left:74.0px;top:274.0px;width:2.0px;height:2.0px;background:#c4c4c4"></div>
<div class="a" style="left:79.0px;top:274.0px;width:2.0px;height:2.0px;background:#c4c4c4"></div>
<div class="a" style="left:84.0px;top:274.0px;width:2.0px;height:2.0px;background:#c4c4c4"></div>
<svg class="a" style="left:50.7px;top:291.0px" width="40.3" height="46.5" viewBox="0 0 48 48" preserveAspectRatio="none"><defs><linearGradient id="g23" x1="0" y1="0" x2="0" y2="1"><stop offset="0" stop-color="#fafbfd"/><stop offset="1" stop-color="#e3e4e8"/></linearGradient></defs>
<path d="M1 1.5 H35 L47 13.5 V45 Q47 47 45 47 H3 Q1 47 1 45 Z" fill="url(#g23)" stroke="#b4bddd" stroke-width="1.6"/>
<path d="M35 1.5 V13.5 H47 Z" fill="#c8d6f2" stroke="#a9b5dc" stroke-width="1.2"/>
<path d="M46 14 V46 H3" fill="none" stroke="#9ea2c6" stroke-width="2.4"/></svg>
<svg class="a" style="left:47.0px;top:374.0px" width="46.0" height="41.6" viewBox="0 0 48 48" preserveAspectRatio="none"><defs><linearGradient id="g24" x1="0" y1="0" x2="0" y2="1"><stop offset="0" stop-color="#fff2a8"/><stop offset="1" stop-color="#e9b820"/></linearGradient>
<linearGradient id="g25" x1="0" y1="0" x2="0" y2="1"><stop offset="0" stop-color="#fff7b8"/><stop offset="0.5" stop-color="#fbdf60"/><stop offset="1" stop-color="#f1c21a"/></linearGradient></defs>
<path d="M1 7 Q1 3 5 3 H16 L20 7 H37 Q40 7 40 10 V36 L5 44 Z" fill="url(#g24)" stroke="#d8a810" stroke-width="1.2"/>
<path d="M9 18 L47 14 L39 38 L4 47 Z" fill="url(#g25)" stroke="#d8a810" stroke-width="1.2"/></svg>
<svg class="a" style="left:50.5px;top:448.6px" width="41.0" height="40.4" viewBox="0 0 48 48" preserveAspectRatio="none"><defs><linearGradient id="g26" x1="0" y1="0" x2="1" y2="0"><stop offset="0" stop-color="#2a8fd0"/><stop offset="0.12" stop-color="#4fb4e8"/><stop offset="0.88" stop-color="#4fb4e8"/><stop offset="1" stop-color="#2a8fd0"/></linearGradient>
<linearGradient id="g27" x1="0" y1="0" x2="0" y2="1"><stop offset="0" stop-color="#6a6a6a"/><stop offset="1" stop-color="#b8b8b8"/></linearGradient></defs>
<rect x="2" y="2" width="44" height="44" rx="5" fill="url(#g26)"/>
<rect x="10" y="2" width="28" height="17" fill="url(#g27)"/>
<rect x="29" y="6" width="5" height="10" fill="#56b6ea"/>
<rect x="9" y="27" width="30" height="19" fill="#e4e4e6"/>
<rect x="9" y="27" width="30" height="3" fill="#f4f4f4"/></svg>
<svg class="a" style="left:46.5px;top:519.6px" width="48.5" height="52.1" viewBox="0 0 48 48" preserveAspectRatio="none"><path d="M3 6 Q3 2 7 2 H37 L46 11 V42 Q46 46 42 46 H7 Q3 46 3 42 Z" fill="#3fa6dc" stroke="#2b8cc6" stroke-width="1"/>
<rect x="11" y="2" width="24" height="14" fill="#ffffff"/>
<rect x="14" y="4" width="5" height="9" fill="#3fa6dc"/>
<rect x="8" y="26" width="33" height="18" fill="#fdfdfd"/>
<rect x="8" y="42" width="33" height="2.5" fill="#e8a035"/>
<path d="M12 31 H34 M12 36 H30" stroke="#c0c0c0" stroke-width="1.2"/>
<path d="M30 40 L41 23 L46 26 L35 43 Z" fill="#f0a020"/>
<path d="M41 23 L43 20 L48 23 L46 26 Z" fill="#e8453c"/>
<path d="M30 40 L35 43 L31 44 Z" fill="#333"/></svg>
<svg class="a" style="left:47.0px;top:599.0px" width="48.0" height="49.0" viewBox="0 0 48 48" preserveAspectRatio="none"><circle cx="24" cy="24" r="23" fill="#e8453c"/>
<path d="M24 47 A23 23 0 0 0 46 30 L32 16 L16 34 Z" fill="#c0392b" opacity="0.6"/>
<path d="M13 16 H24 L29 21 V36 H13 Z" fill="#fff"/>
<path d="M20 11 H30 L35 16 V31 H29 V21 L24 16 H20 Z" fill="#fff"/></svg>
<svg class="a" style="left:47.0px;top:678.0px" width="48.0" height="46.0" viewBox="0 0 48 48" preserveAspectRatio="none"><rect x="2" y="3" width="24" height="18" fill="#fdfdfd" stroke="#5076b8" stroke-width="2"/>
<rect x="2" y="3" width="24" height="4" fill="#5a82c8"/>
<rect x="12" y="14" width="24" height="18" fill="#f4f6fa" stroke="#5076b8" stroke-width="2"/>
<rect x="12" y="14" width="24" height="4" fill="#5a82c8"/>
<rect x="22" y="26" width="24" height="18" fill="#eef2f8" stroke="#5076b8" stroke-width="2"/>
<rect x="22" y="26" width="24" height="4" fill="#5a82c8"/></svg>
<svg class="a" style="left:49.0px;top:754.0px" width="46.0" height="50.0" viewBox="0 0 48 48" preserveAspectRatio="none"><rect x="28" y="2" width="18" height="18" fill="#d8ecfc" stroke="#c0d8f0"/>
<rect x="2" y="28" width="18" height="18" fill="#d8ecfc" stroke="#c0d8f0"/>
<rect x="15" y="15" width="18" height="18" fill="#20a020"/>
<rect x="15" y="15" width="18" height="6" fill="#50c040"/></svg>
<svg class="a" style="left:47.0px;top:832.0px" width="46.0" height="45.0" viewBox="0 0 48 48" preserveAspectRatio="none"><path d="M8 14 H40 L36 44 H12 Z" fill="#2a7cc0"/>
<path d="M15 19 L17 40 M24 19 V40 M33 19 L31 40" stroke="#fff" stroke-width="3"/>
<path d="M6 10 L40 6 L42 11 L8 15 Z" fill="#2a7cc0"/>
<path d="M18 7 Q22 1 28 5" stroke="#2a7cc0" stroke-width="3" fill="none"/>
<path d="M2 20 L10 10 L8 22 Z" fill="#2a7cc0"/>
<rect x="4" y="44" width="40" height="3" fill="#ccc"/></svg>
<svg class="a" style="left:51.0px;top:908.7px" width="40.0" height="50.0" viewBox="0 0 48 48" preserveAspectRatio="none"><circle cx="17" cy="10" r="9" fill="#58c0f0" opacity="0.85"/>
<circle cx="17" cy="10" r="5" fill="#8ad8fa"/>
<path d="M14 8 Q17 5 20 8 V24 Q23 20 27 23 Q30 20 33 24 Q37 22 39 27 V38 Q39 46 31 47 H22 Q16 46 13 40 L5 30 Q4 26 8 26 L14 32 Z" fill="#fdfdfd" stroke="#222" stroke-width="2.2" stroke-linejoin="round"/>
<path d="M27 23 V30 M33 24 V31" stroke="#222" stroke-width="1.8"/>
<path d="M20 46 H34 L32 47 H22 Z" fill="#333"/></svg>
<svg class="a" style="left:45.0px;top:986.0px" width="50.0" height="51.0" viewBox="0 0 48 48" preserveAspectRatio="none"><path d="M12 6 L30 2 L40 14 L22 20 Z" fill="#f4f8fc" stroke="#6a9ad8" stroke-width="1.2"/>
<path d="M2 22 L38 14 L46 32 L14 46 Z" fill="#f8d04a" stroke="#d8a810" stroke-width="1"/>
<path d="M6 24 L38 16 L44 24 L12 32 Z" fill="#fff09a" opacity="0.7"/>
<path d="M34 34 Q36 14 20 16 Q12 18 12 26" stroke="#38a020" stroke-width="6" fill="none" stroke-linecap="round"/>
<path d="M4 24 L13 34 L20 24 Z" fill="#38a020"/></svg>
<div class="a" style="left:49.0px;top:353.0px;width:44.0px;height:2.0px;background:#dcdcdc;border-bottom:1px solid #fff"></div>
<div class="a" style="left:49.0px;top:430.6px;width:44.0px;height:2.0px;background:#dcdcdc;border-bottom:1px solid #fff"></div>
<div class="a" style="left:49.0px;top:507.7px;width:44.0px;height:2.0px;background:#dcdcdc;border-bottom:1px solid #fff"></div>
<div class="a" style="left:49.0px;top:585.0px;width:44.0px;height:2.0px;background:#dcdcdc;border-bottom:1px solid #fff"></div>
<div class="a" style="left:49.0px;top:663.0px;width:44.0px;height:2.0px;background:#dcdcdc;border-bottom:1px solid #fff"></div>
<div class="a" style="left:49.0px;top:740.0px;width:44.0px;height:2.0px;background:#dcdcdc;border-bottom:1px solid #fff"></div>
<div class="a" style="left:49.0px;top:817.7px;width:44.0px;height:2.0px;background:#dcdcdc;border-bottom:1px solid #fff"></div>
<div class="a" style="left:49.0px;top:894.6px;width:44.0px;height:2.0px;background:#dcdcdc;border-bottom:1px solid #fff"></div>
<div class="a" style="left:49.0px;top:972.0px;width:44.0px;height:2.0px;background:#dcdcdc;border-bottom:1px solid #fff"></div>
<div class="a" style="left:49.0px;top:1050.0px;width:44.0px;height:2.0px;background:#dcdcdc;border-bottom:1px solid #fff"></div>
<div class="a" style="left:1216.5px;top:927.0px;width:2.0px;height:2.0px;background:#a8a8a8"></div>
<div class="a" style="left:2587.0px;top:927.0px;width:2.0px;height:2.0px;background:#b4b4b4"></div>
<div class="a" style="left:1216.5px;top:932.0px;width:2.0px;height:2.0px;background:#a8a8a8"></div>
<div class="a" style="left:2587.0px;top:932.0px;width:2.0px;height:2.0px;background:#b4b4b4"></div>
<div class="a" style="left:1216.5px;top:937.0px;width:2.0px;height:2.0px;background:#a8a8a8"></div>
<div class="a" style="left:2587.0px;top:937.0px;width:2.0px;height:2.0px;background:#b4b4b4"></div>
<div class="a" style="left:1216.5px;top:942.0px;width:2.0px;height:2.0px;background:#a8a8a8"></div>
<div class="a" style="left:2587.0px;top:942.0px;width:2.0px;height:2.0px;background:#b4b4b4"></div>
<div class="a" style="left:1216.5px;top:947.0px;width:2.0px;height:2.0px;background:#a8a8a8"></div>
<div class="a" style="left:2587.0px;top:947.0px;width:2.0px;height:2.0px;background:#b4b4b4"></div>
<div class="a" style="left:1216.5px;top:952.0px;width:2.0px;height:2.0px;background:#a8a8a8"></div>
<div class="a" style="left:2587.0px;top:952.0px;width:2.0px;height:2.0px;background:#b4b4b4"></div>
<div class="a" style="left:392.5px;top:954.0px;width:2.0px;height:2.0px;background:#b0b0b0"></div>
<div class="a" style="left:397.5px;top:954.0px;width:2.0px;height:2.0px;background:#b0b0b0"></div>
<div class="a" style="left:402.5px;top:954.0px;width:2.0px;height:2.0px;background:#b0b0b0"></div>
</body></html>
